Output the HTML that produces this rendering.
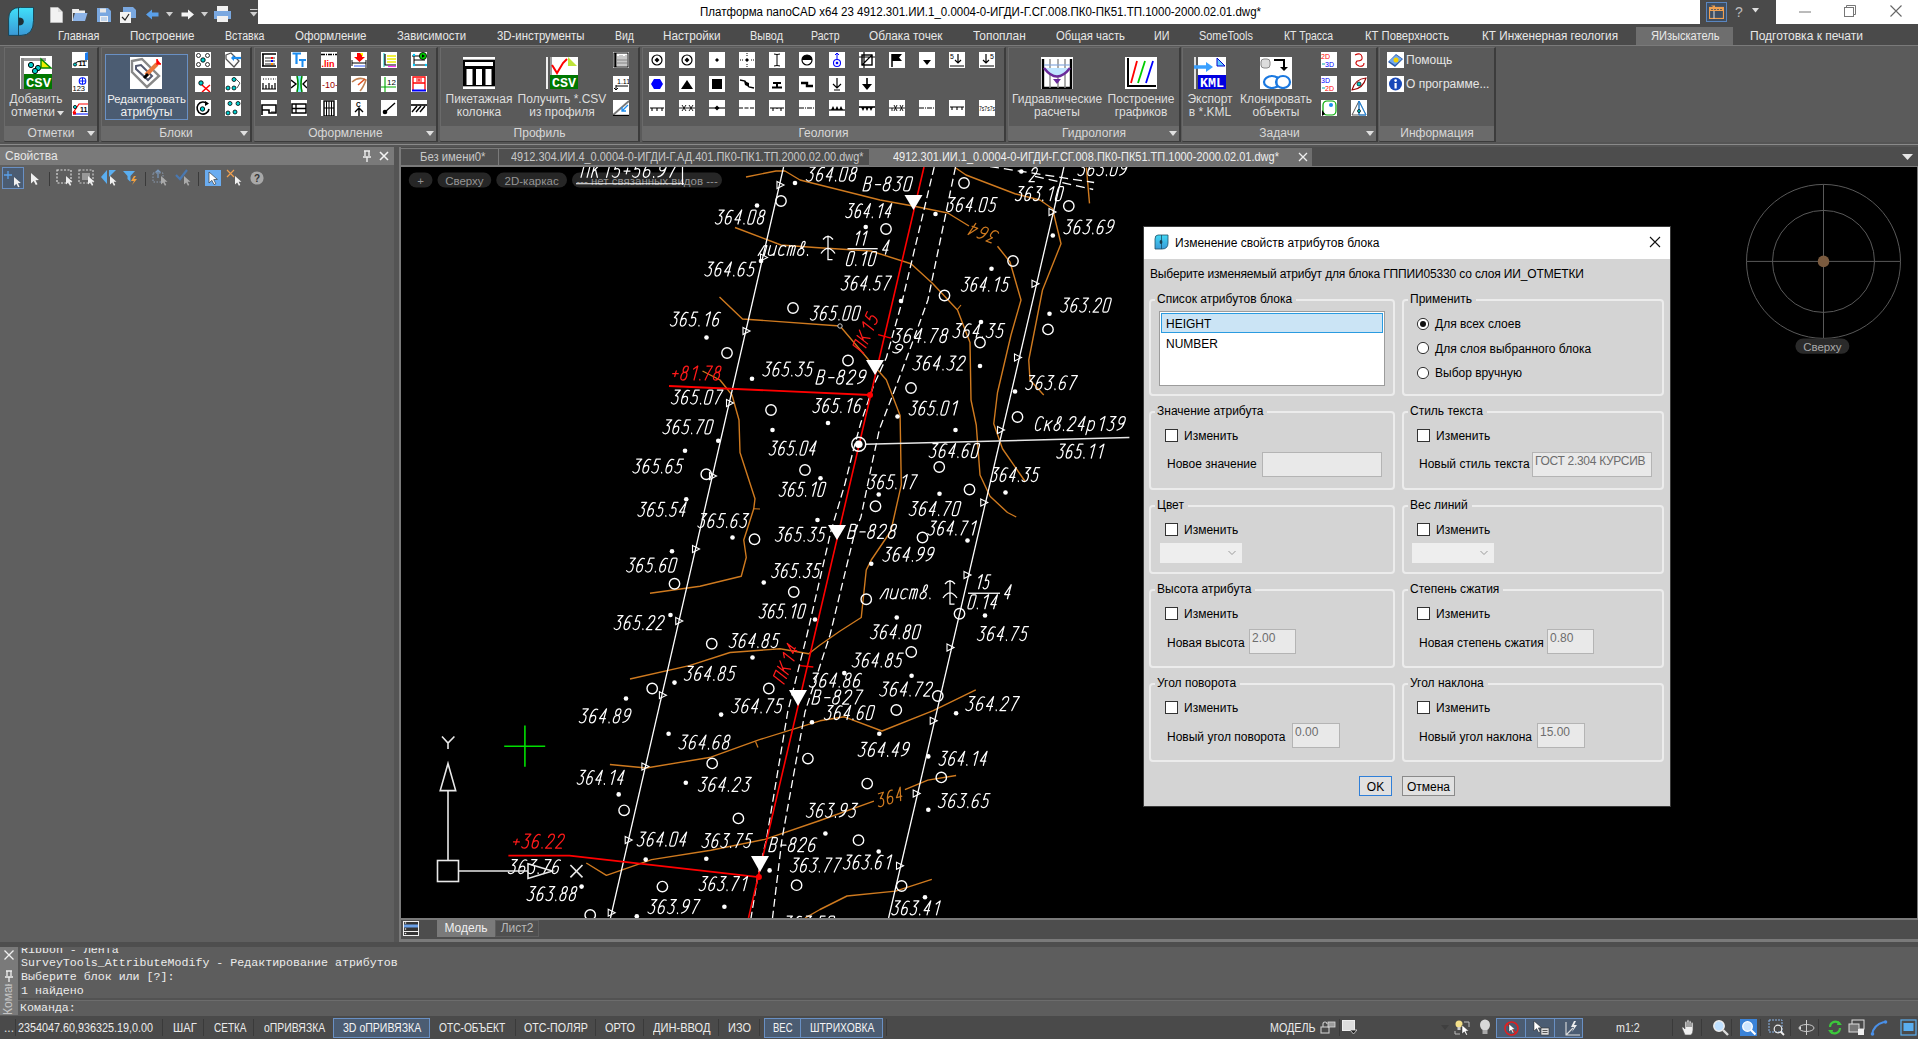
<!DOCTYPE html>
<html><head><meta charset="utf-8"><style>
html,body{margin:0;padding:0;width:1918px;height:1039px;overflow:hidden;background:#4a4a4a;font-family:"Liberation Sans", sans-serif;}
.r{position:absolute;}
.t{position:absolute;white-space:nowrap;line-height:1;}
svg{position:absolute;}
</style></head><body>
<div class="r" style="left:0px;top:0px;width:1918px;height:24px;background:#4a4a4a;"></div>
<div class="r" style="left:258px;top:0px;width:1442px;height:24px;background:#ffffff;"></div>
<div class="r" style="left:1776px;top:0px;width:142px;height:24px;background:#ffffff;"></div>
<div class="t" style="left:700px;top:5.84px;font-size:12px;color:#000000;transform:scaleX(0.9592);transform-origin:0 0;">Платформа nanoCAD x64 23 4912.301.ИИ.1_0.0004-0-ИГДИ-Г.СГ.008.ПК0-ПК51.ТП.1000-2000.02.01.dwg*</div>
<div class="r" style="left:0px;top:24px;width:1918px;height:21px;background:#4a4a4a;"></div>
<div class="r" style="left:1636px;top:27px;width:97px;height:18px;background:#6e6e6e;"></div>
<div class="t" style="left:58px;top:29.84px;font-size:12px;color:#e8e8e8;transform:scaleX(0.9086);transform-origin:0 0;">Главная</div>
<div class="t" style="left:130px;top:29.84px;font-size:12px;color:#e8e8e8;transform:scaleX(0.9653);transform-origin:0 0;">Построение</div>
<div class="t" style="left:225px;top:29.84px;font-size:12px;color:#e8e8e8;transform:scaleX(0.8856);transform-origin:0 0;">Вставка</div>
<div class="t" style="left:295px;top:29.84px;font-size:12px;color:#e8e8e8;transform:scaleX(0.9600);transform-origin:0 0;">Оформление</div>
<div class="t" style="left:396.5px;top:29.84px;font-size:12px;color:#e8e8e8;transform:scaleX(0.9475);transform-origin:0 0;">Зависимости</div>
<div class="t" style="left:497px;top:29.84px;font-size:12px;color:#e8e8e8;transform:scaleX(0.9487);transform-origin:0 0;">3D-инструменты</div>
<div class="t" style="left:615px;top:29.84px;font-size:12px;color:#e8e8e8;transform:scaleX(0.8752);transform-origin:0 0;">Вид</div>
<div class="t" style="left:663px;top:29.84px;font-size:12px;color:#e8e8e8;transform:scaleX(0.9773);transform-origin:0 0;">Настройки</div>
<div class="t" style="left:750px;top:29.84px;font-size:12px;color:#e8e8e8;transform:scaleX(0.9096);transform-origin:0 0;">Вывод</div>
<div class="t" style="left:810.5px;top:29.84px;font-size:12px;color:#e8e8e8;transform:scaleX(0.8783);transform-origin:0 0;">Растр</div>
<div class="t" style="left:869px;top:29.84px;font-size:12px;color:#e8e8e8;transform:scaleX(0.9825);transform-origin:0 0;">Облака точек</div>
<div class="t" style="left:973px;top:29.84px;font-size:12px;color:#e8e8e8;transform:scaleX(0.9946);transform-origin:0 0;">Топоплан</div>
<div class="t" style="left:1056px;top:29.84px;font-size:12px;color:#e8e8e8;transform:scaleX(0.9419);transform-origin:0 0;">Общая часть</div>
<div class="t" style="left:1154px;top:29.84px;font-size:12px;color:#e8e8e8;transform:scaleX(0.8986);transform-origin:0 0;">ИИ</div>
<div class="t" style="left:1199px;top:29.84px;font-size:12px;color:#e8e8e8;transform:scaleX(0.9097);transform-origin:0 0;">SomeTools</div>
<div class="t" style="left:1284px;top:29.84px;font-size:12px;color:#e8e8e8;transform:scaleX(0.8699);transform-origin:0 0;">КТ Трасса</div>
<div class="t" style="left:1365px;top:29.84px;font-size:12px;color:#e8e8e8;transform:scaleX(0.9391);transform-origin:0 0;">КТ Поверхность</div>
<div class="t" style="left:1482px;top:29.84px;font-size:12px;color:#e8e8e8;transform:scaleX(0.9764);transform-origin:0 0;">КТ Инженерная геология</div>
<div class="t" style="left:1650.5px;top:29.84px;font-size:12px;color:#e8e8e8;transform:scaleX(0.9228);transform-origin:0 0;">ЯИзыскатель</div>
<div class="t" style="left:1750px;top:29.84px;font-size:12px;color:#e8e8e8;transform:scaleX(1.0026);transform-origin:0 0;">Подготовка к печати</div>
<div class="r" style="left:0px;top:45px;width:1918px;height:98px;background:#5b5b5b;"></div>
<div class="r" style="left:0px;top:45px;width:1918px;height:1px;background:#7a7a7a;"></div>
<div class="r" style="left:4px;top:47px;width:95px;height:95px;background:#5a5a5a;border:1px solid #6a6a6a;border-right:2px solid #3c3c3c;border-bottom:2px solid #3c3c3c;box-sizing:border-box;"></div>
<div class="r" style="left:5px;top:126px;width:92px;height:15px;background:#6a6a6a;"></div>
<div class="t" style="left:-49.00px;width:200px;text-align:center;top:126.84px;font-size:12px;color:#d8d8d8;">Отметки</div>
<div class="r" style="left:87px;top:131px;width:0;height:0;border-left:4px solid transparent;border-right:4px solid transparent;border-top:5px solid #e0e0e0;"></div>
<div class="r" style="left:101px;top:47px;width:151px;height:95px;background:#5a5a5a;border:1px solid #6a6a6a;border-right:2px solid #3c3c3c;border-bottom:2px solid #3c3c3c;box-sizing:border-box;"></div>
<div class="r" style="left:102px;top:126px;width:148px;height:15px;background:#6a6a6a;"></div>
<div class="t" style="left:76.00px;width:200px;text-align:center;top:126.84px;font-size:12px;color:#d8d8d8;">Блоки</div>
<div class="r" style="left:240px;top:131px;width:0;height:0;border-left:4px solid transparent;border-right:4px solid transparent;border-top:5px solid #e0e0e0;"></div>
<div class="r" style="left:254px;top:47px;width:184px;height:95px;background:#5a5a5a;border:1px solid #6a6a6a;border-right:2px solid #3c3c3c;border-bottom:2px solid #3c3c3c;box-sizing:border-box;"></div>
<div class="r" style="left:255px;top:126px;width:181px;height:15px;background:#6a6a6a;"></div>
<div class="t" style="left:245.50px;width:200px;text-align:center;top:126.84px;font-size:12px;color:#d8d8d8;">Оформление</div>
<div class="r" style="left:426px;top:131px;width:0;height:0;border-left:4px solid transparent;border-right:4px solid transparent;border-top:5px solid #e0e0e0;"></div>
<div class="r" style="left:440px;top:47px;width:200px;height:95px;background:#5a5a5a;border:1px solid #6a6a6a;border-right:2px solid #3c3c3c;border-bottom:2px solid #3c3c3c;box-sizing:border-box;"></div>
<div class="r" style="left:441px;top:126px;width:197px;height:15px;background:#6a6a6a;"></div>
<div class="t" style="left:439.50px;width:200px;text-align:center;top:126.84px;font-size:12px;color:#d8d8d8;">Профиль</div>
<div class="r" style="left:642px;top:47px;width:364px;height:95px;background:#5a5a5a;border:1px solid #6a6a6a;border-right:2px solid #3c3c3c;border-bottom:2px solid #3c3c3c;box-sizing:border-box;"></div>
<div class="r" style="left:643px;top:126px;width:361px;height:15px;background:#6a6a6a;"></div>
<div class="t" style="left:723.50px;width:200px;text-align:center;top:126.84px;font-size:12px;color:#d8d8d8;">Геология</div>
<div class="r" style="left:1008px;top:47px;width:173px;height:95px;background:#5a5a5a;border:1px solid #6a6a6a;border-right:2px solid #3c3c3c;border-bottom:2px solid #3c3c3c;box-sizing:border-box;"></div>
<div class="r" style="left:1009px;top:126px;width:170px;height:15px;background:#6a6a6a;"></div>
<div class="t" style="left:994.00px;width:200px;text-align:center;top:126.84px;font-size:12px;color:#d8d8d8;">Гидрология</div>
<div class="r" style="left:1169px;top:131px;width:0;height:0;border-left:4px solid transparent;border-right:4px solid transparent;border-top:5px solid #e0e0e0;"></div>
<div class="r" style="left:1182px;top:47px;width:196px;height:95px;background:#5a5a5a;border:1px solid #6a6a6a;border-right:2px solid #3c3c3c;border-bottom:2px solid #3c3c3c;box-sizing:border-box;"></div>
<div class="r" style="left:1183px;top:126px;width:193px;height:15px;background:#6a6a6a;"></div>
<div class="t" style="left:1179.50px;width:200px;text-align:center;top:126.84px;font-size:12px;color:#d8d8d8;">Задачи</div>
<div class="r" style="left:1366px;top:131px;width:0;height:0;border-left:4px solid transparent;border-right:4px solid transparent;border-top:5px solid #e0e0e0;"></div>
<div class="r" style="left:1379px;top:47px;width:117px;height:95px;background:#5a5a5a;border:1px solid #6a6a6a;border-right:2px solid #3c3c3c;border-bottom:2px solid #3c3c3c;box-sizing:border-box;"></div>
<div class="r" style="left:1380px;top:126px;width:114px;height:15px;background:#6a6a6a;"></div>
<div class="t" style="left:1337.00px;width:200px;text-align:center;top:126.84px;font-size:12px;color:#d8d8d8;">Информация</div>
<svg style="left:8px;top:7px" width="26" height="29" viewBox="0 0 26 29"><defs><linearGradient id="lgA" x1="0" y1="0" x2="0" y2="1"><stop offset="0" stop-color="#40e0fa"/><stop offset="1" stop-color="#3a98d6"/></linearGradient></defs><path d="M0.6 12 Q0.6 0.4 12.5 0.4 H25.5 V13.5 Q25.5 28.4 13 28.4 H0.6Z" fill="url(#lgA)" stroke="#123f50" stroke-width="0.9"/><path d="M10.5 0.5 V28.5" stroke="#123f50" stroke-width="0.9"/><path d="M10.5 10.5 Q15.8 10.5 15.8 14.5 Q15.8 18.5 10.5 18.5Z" fill="#1e2e36"/></svg>
<svg style="left:50px;top:7px" width="13" height="16" viewBox="0 0 13 16"><path d="M0.5 0.5 H8 L12.5 5 V15.5 H0.5Z" fill="#f2f2f2" stroke="#ccc" stroke-width="0.6"/><path d="M8 0.5 V5 H12.5" fill="#ddd"/></svg>
<svg style="left:72px;top:8px" width="16" height="14" viewBox="0 0 16 14"><path d="M0.5 1 H7 V2.5 H13 V5 H0.5Z" fill="#eee"/><path d="M0.5 13 L3 5 H15.5 L13 13Z" fill="#8db4e8"/><path d="M0.5 1 V13" stroke="#ddd"/></svg>
<svg style="left:97px;top:8px" width="14" height="14" viewBox="0 0 14 14"><path d="M0 0 H11 L14 3 V14 H0Z" fill="#7aa8e0"/><rect x="3" y="0.5" width="6" height="4" fill="#e8e8e8"/><rect x="3" y="8" width="8" height="6" fill="#f2f2f2"/><path d="M4 10 H10 M4 12 H10" stroke="#7aa8e0" stroke-width="0.8"/></svg>
<svg style="left:120px;top:7px" width="16" height="16" viewBox="0 0 16 16"><path d="M3 0 H13 L16 3 V11 H3Z" fill="#7aa8e0"/><rect x="0" y="5" width="11" height="11" fill="#f2f2f2"/><path d="M2 10 L5 13 L9 7" fill="none" stroke="#222" stroke-width="1.2"/></svg>
<svg style="left:146px;top:9px" width="13" height="11" viewBox="0 0 13 11"><path d="M0 5.5 L6 0.5 V3.5 H12.5 V7.5 H6 V10.5Z" fill="#5aa0ea"/></svg>
<svg style="left:166px;top:12px" width="8" height="5" viewBox="0 0 8 5"><path d="M0 0 H7 L3.5 4.5Z" fill="#cfcfcf"/></svg>
<svg style="left:181px;top:9px" width="13" height="11" viewBox="0 0 13 11"><path d="M13 5.5 L7 0.5 V3.5 H0.5 V7.5 H7 V10.5Z" fill="#f4f4f4"/></svg>
<svg style="left:201px;top:12px" width="8" height="5" viewBox="0 0 8 5"><path d="M0 0 H7 L3.5 4.5Z" fill="#cfcfcf"/></svg>
<svg style="left:214px;top:6px" width="17" height="16" viewBox="0 0 17 16"><rect x="3" y="0" width="11" height="5" fill="#f0f0f0"/><rect x="0" y="5" width="17" height="8" fill="#7aa8e0"/><rect x="3" y="10" width="11" height="6" fill="#f0f0f0"/></svg>
<svg style="left:250px;top:9px" width="8" height="9" viewBox="0 0 8 9"><path d="M0 0.5 H7.5" stroke="#cfcfcf" stroke-width="1"/><path d="M0 3 H7.5 L3.75 7.5Z" fill="#cfcfcf"/></svg>
<div class="r" style="left:1706px;top:2px;width:21px;height:20px;background:#3f4f63;border:1px solid #5a86c0;box-sizing:border-box;"></div>
<svg style="left:1709px;top:5px" width="15" height="14" viewBox="0 0 15 14"><rect x="0.5" y="2.5" width="14" height="11" fill="none" stroke="#f0a050" stroke-width="1.2"/><rect x="1" y="3" width="13" height="3" fill="#f0a050"/><path d="M2 0.5 H6 V3" fill="#f0a050"/><path d="M5 6 V13.5" stroke="#e0e0e0" stroke-width="1"/><path d="M2 4.5 H13" stroke="#3f4f63" stroke-width="0.8" stroke-dasharray="2,1"/></svg>
<div class="t" style="left:1731.00px;width:16px;text-align:center;top:5.15px;font-size:14px;color:#bdbdbd;">?</div>
<svg style="left:1752px;top:8px" width="7" height="5" viewBox="0 0 7 5"><path d="M0 0 H7 L3.5 4.5Z" fill="#e0e0e0"/></svg>
<svg style="left:1799px;top:11px" width="12" height="2" viewBox="0 0 12 2"><path d="M0 1 H12" stroke="#777" stroke-width="1"/></svg>
<svg style="left:1844px;top:5px" width="12" height="12" viewBox="0 0 12 12"><path d="M2.5 2.5 V0.5 H11.5 V9.5 H9.5" fill="none" stroke="#777"/><rect x="0.5" y="2.5" width="9" height="9" fill="none" stroke="#777"/></svg>
<svg style="left:1890px;top:5px" width="12" height="12" viewBox="0 0 12 12"><path d="M0.5 0.5 L11.5 11.5 M11.5 0.5 L0.5 11.5" stroke="#666" stroke-width="1.1"/></svg>
<svg style="left:20px;top:56px" width="32" height="33" viewBox="0 0 32 33"><rect x="0" y="0" width="32" height="33" fill="#fff"/><rect x="1" y="2" width="3" height="31" fill="#888"/><rect x="4" y="2" width="22" height="3" fill="#999"/><g fill="#0cc" stroke="#000" stroke-width="1"><circle cx="11" cy="9" r="2.6"/><circle cx="18" cy="12" r="2.6"/><circle cx="15" cy="15" r="2.6"/></g><path d="M21 3 L31 12 H21Z" fill="#ee0" stroke="#080" stroke-width="1.4"/><rect x="4" y="18" width="28" height="15" fill="#007700"/><text x="6" y="31" font-family="Liberation Mono" font-weight="bold" font-size="13" fill="#fff" textLength="25" lengthAdjust="spacingAndGlyphs">CSV</text></svg>
<svg style="left:72px;top:52px" width="16" height="16" viewBox="0 0 16 16"><rect x="0" y="0" width="16" height="16" fill="#fff"/><path d="M2 13 Q4 9 9 9 H15" fill="none" stroke="#000" stroke-width="1"/><circle cx="3" cy="12.5" r="1.6" fill="#0cc" stroke="#000" stroke-width="0.8"/><text x="6.5" y="14" font-size="7" font-family="Liberation Sans" font-weight="bold" fill="#000">11</text><path d="M13 1 L16 0 V8 H13Z" fill="#1a7cf0"/></svg>
<svg style="left:72px;top:76px" width="16" height="16" viewBox="0 0 16 16"><rect x="0" y="0" width="16" height="16" fill="#fff"/><text x="0.5" y="15" font-size="7.5" font-family="Liberation Sans" fill="#000">123</text><circle cx="10.5" cy="5" r="3.3" fill="none" stroke="#0018ff" stroke-width="1.1"/><path d="M10.5 1.7 V8.3 M7.2 5 H13.8" stroke="#0018ff" stroke-width="1"/></svg>
<svg style="left:72px;top:100px" width="16" height="16" viewBox="0 0 16 16"><rect x="0" y="0" width="16" height="16" fill="#fff"/><path d="M1 13 L7 4 H16" fill="none" stroke="#f00" stroke-width="1.2"/><path d="M1 14 H16" stroke="#2030ff" stroke-width="1.2"/><rect x="1" y="11.5" width="3" height="3" fill="#f00"/><circle cx="3" cy="7" r="1.6" fill="#0cc" stroke="#000" stroke-width="0.8"/><text x="8" y="12" font-size="7" font-family="Liberation Sans" font-weight="bold" fill="#000">11</text></svg>
<div class="t" style="left:-4.00px;width:80px;text-align:center;top:93.34px;font-size:12px;color:#dedede;">Добавить</div>
<div class="t" style="left:-7.00px;width:80px;text-align:center;top:105.84px;font-size:12px;color:#dedede;">отметки</div>
<svg style="left:57px;top:111px" width="7" height="5" viewBox="0 0 7 5"><path d="M0 0 H7 L3.5 4.5Z" fill="#e0e0e0"/></svg>
<div class="r" style="left:105px;top:54px;width:83px;height:66px;background:#4b5c72;border:1px solid #6990c4;box-sizing:border-box;"></div>
<svg style="left:130px;top:57px" width="32" height="32" viewBox="0 0 32 32"><rect width="32" height="32" fill="#fff"/><path d="M2 4 L12 2 L29 19 L17 30 L2 15Z" fill="none" stroke="#888" stroke-width="2.4"/><path d="M6 9 L11 8 L22 19 L18 23 L6 12Z" fill="none" stroke="#555a70" stroke-width="2"/><path d="M16 18 L27 7" stroke="#e8783c" stroke-width="4"/><path d="M14 21 L18 17" stroke="#000" stroke-width="3"/><path d="M27 2 V7 H31" fill="#f00" stroke="#f00" stroke-width="1.5"/></svg>
<div class="t" style="left:101.50px;width:90px;text-align:center;top:93.85px;font-size:11.4px;color:#f0f0f0;">Редактировать</div>
<div class="t" style="left:101.50px;width:90px;text-align:center;top:105.84px;font-size:12px;color:#f0f0f0;">атрибуты</div>
<svg style="left:195px;top:52px" width="16" height="16" viewBox="0 0 16 16"><rect x="0" y="0" width="16" height="16" fill="#fff"/><g fill="none" stroke="#000" stroke-width="0.8"><circle cx="3.5" cy="3.5" r="2"/><circle cx="12.5" cy="3.5" r="2"/><circle cx="3.5" cy="12.5" r="2"/><circle cx="12.5" cy="12.5" r="2"/></g><circle cx="8" cy="8" r="2.2" fill="#0cc" stroke="#000" stroke-width="0.9"/></svg>
<svg style="left:195px;top:76px" width="16" height="16" viewBox="0 0 16 16"><rect x="0" y="0" width="16" height="16" fill="#fff"/><circle cx="6" cy="7" r="2.2" fill="#0cc" stroke="#000" stroke-width="0.9"/><path d="M7 9 L15 16 M15 9 L7 16" stroke="#f00" stroke-width="1.5"/></svg>
<svg style="left:195px;top:100px" width="16" height="16" viewBox="0 0 16 16"><rect x="0" y="0" width="16" height="16" fill="#fff"/><path d="M12.5 4 A6 6 0 1 0 14 9" fill="none" stroke="#000" stroke-width="1.6"/><path d="M10 1 L14 3.5 L10 6Z" fill="#000"/><circle cx="7.5" cy="9" r="2.2" fill="#0cc" stroke="#000" stroke-width="0.9"/></svg>
<svg style="left:225px;top:52px" width="16" height="16" viewBox="0 0 16 16"><rect x="0" y="0" width="16" height="16" fill="#fff"/><path d="M1 3 L6 1 L14 9 L9 15 L1 7Z" fill="#fff" stroke="#555" stroke-width="1.3"/><path d="M7 6 H16" stroke="#1a8cf0" stroke-width="2.2"/><path d="M6 6 L9 3 V9Z" fill="#1a8cf0"/></svg>
<svg style="left:225px;top:76px" width="16" height="16" viewBox="0 0 16 16"><rect x="0" y="0" width="16" height="16" fill="#fff"/><g fill="#0cc" stroke="#000" stroke-width="0.8"><circle cx="9" cy="3.5" r="2"/><circle cx="3" cy="12" r="2"/><circle cx="9" cy="12" r="2"/></g><path d="M11 3 L15 7 L12 12" fill="none" stroke="#555" stroke-width="1"/></svg>
<svg style="left:225px;top:100px" width="16" height="16" viewBox="0 0 16 16"><rect x="0" y="0" width="16" height="16" fill="#fff"/><g fill="#0cc" stroke="#000" stroke-width="0.8"><circle cx="5" cy="3.5" r="2"/><circle cx="13" cy="3.5" r="2"/><circle cx="3" cy="13" r="2"/><circle cx="10" cy="12" r="2"/></g></svg>
<svg style="left:261px;top:52px" width="16" height="16" viewBox="0 0 16 16"><rect x="0" y="0" width="16" height="16" fill="#fff"/><path d="M1 2 H15 M1 14 H15 M2 2 V14" stroke="#000" stroke-width="1.6"/><path d="M4 6 H14 M4 9 H14 M4 12 H14" stroke="#777" stroke-width="1.3"/><rect x="10" y="5" width="2" height="2" fill="#f00"/><rect x="10" y="8" width="2" height="2" fill="#00f"/><rect x="10" y="11" width="2" height="2" fill="#f80"/></svg>
<svg style="left:291px;top:52px" width="16" height="16" viewBox="0 0 16 16"><rect x="0" y="0" width="16" height="16" fill="#fff"/><path d="M1.5 1.5 H10 M5.5 1.5 V12" stroke="#1a8cf0" stroke-width="2.2"/><path d="M8 8 H15 M11.5 8 V15" stroke="#1a8cf0" stroke-width="2"/></svg>
<svg style="left:321px;top:52px" width="16" height="16" viewBox="0 0 16 16"><rect x="0" y="0" width="16" height="16" fill="#fff"/><path d="M0 2.5 H16" stroke="#000" stroke-width="1.4" stroke-dasharray="4,1,1,1"/><text x="0.5" y="14.5" font-size="9" font-weight="bold" font-family="Liberation Sans" fill="#f00">.lin</text></svg>
<svg style="left:351px;top:52px" width="16" height="16" viewBox="0 0 16 16"><rect x="0" y="0" width="16" height="16" fill="#fff"/><path d="M6 1 H11 V5 H14 L8.5 10 L3 5 H6Z" fill="#f00"/><path d="M9 1 H12 V5" fill="#ff0"/><path d="M1 8 V14 M15 8 V16 M1 11 H15" stroke="#000" stroke-width="1"/><path d="M3 14 H14" stroke="#2f5cff" stroke-width="1"/></svg>
<svg style="left:381px;top:52px" width="16" height="16" viewBox="0 0 16 16"><rect x="0" y="0" width="16" height="16" fill="#fff"/><path d="M3 1 V15" stroke="#0cc" stroke-width="1"/><path d="M4 2 V13 H15" fill="none" stroke="#000" stroke-width="1.2"/><path d="M6 4 H15 M6 7 H15 M6 10 H15" stroke="#ee0" stroke-width="1.6"/><path d="M7 14.5 H15" stroke="#f3f" stroke-width="1.2"/></svg>
<svg style="left:411px;top:52px" width="16" height="16" viewBox="0 0 16 16"><rect x="0" y="0" width="16" height="16" fill="#fff"/><path d="M1 4 H14 M3 8 H14 M3 13 H15 M3 4 V13" stroke="#000" stroke-width="1"/><circle cx="12" cy="4" r="3.6" fill="#0c0" stroke="#000" stroke-width="0.8"/><path d="M11 2.2 L14 4 L11 5.8Z" fill="#000"/><g fill="#0cf"><circle cx="3" cy="3" r="1.2"/><circle cx="3" cy="13" r="1.2"/><circle cx="15" cy="13" r="1.2"/></g></svg>
<svg style="left:261px;top:76px" width="16" height="16" viewBox="0 0 16 16"><rect x="0" y="0" width="16" height="16" fill="#fff"/><path d="M1 13 H15 M2 13 V7 M5 13 V9 M8 13 V7 M11 13 V9 M14 13 V7" stroke="#000" stroke-width="1.2"/><path d="M2 3 H15" stroke="#000" stroke-width="1" stroke-dasharray="1,1.5"/></svg>
<svg style="left:291px;top:76px" width="16" height="16" viewBox="0 0 16 16"><rect x="0" y="0" width="16" height="16" fill="#fff"/><path d="M6 0 Q8 8 6 16 H11 Q9 8 11 0Z" fill="#7ef"/><path d="M6 0 Q8 8 6 16 M11 0 Q9 8 11 16" fill="none" stroke="#080" stroke-width="1.6"/><path d="M0 4 L5 8 L0 12 M16 4 L12 8 L16 12" fill="none" stroke="#000" stroke-width="1.4"/></svg>
<svg style="left:321px;top:76px" width="16" height="16" viewBox="0 0 16 16"><rect x="0" y="0" width="16" height="16" fill="#fff"/><text x="1" y="12" font-size="9" font-family="Liberation Sans" fill="#900">-10-</text></svg>
<svg style="left:351px;top:76px" width="16" height="16" viewBox="0 0 16 16"><rect x="0" y="0" width="16" height="16" fill="#fff"/><path d="M1 6 Q8 0 15 4 Q12 12 9 15" fill="none" stroke="#c08050" stroke-width="1.6"/><path d="M7 9 L14 3" stroke="#e05020" stroke-width="1.6"/></svg>
<svg style="left:381px;top:76px" width="16" height="16" viewBox="0 0 16 16"><rect x="0" y="0" width="16" height="16" fill="#fff"/><path d="M4 1 V16 M0 11 H15" stroke="#0a0" stroke-width="1.1"/><text x="6" y="9" font-size="8" font-family="Liberation Sans" fill="#000">12</text></svg>
<svg style="left:411px;top:76px" width="16" height="16" viewBox="0 0 16 16"><rect x="0" y="0" width="16" height="16" fill="#fff"/><path d="M2 15 V1 H14 V15 M2 7 H14" fill="none" stroke="#f00" stroke-width="1.3"/><path d="M5 3 H11 M5 5 H11 M8 3 V5" stroke="#f00" stroke-width="1"/><path d="M1 14.5 H15" stroke="#00f" stroke-width="2"/></svg>
<svg style="left:261px;top:100px" width="16" height="16" viewBox="0 0 16 16"><rect x="0" y="0" width="16" height="16" fill="#fff"/><path d="M1 5 H15 V13 H8 V10 H1Z M1 5 V15" fill="none" stroke="#000" stroke-width="1.6"/><path d="M10 12 H14" stroke="#000" stroke-width="0.8"/></svg>
<svg style="left:291px;top:100px" width="16" height="16" viewBox="0 0 16 16"><rect x="0" y="0" width="16" height="16" fill="#fff"/><rect x="1" y="4" width="14" height="9" fill="none" stroke="#000" stroke-width="1.5"/><path d="M1 8.5 H15 M5 4 V13" stroke="#000" stroke-width="1.3"/></svg>
<svg style="left:321px;top:100px" width="16" height="16" viewBox="0 0 16 16"><rect x="0" y="0" width="16" height="16" fill="#fff"/><rect x="3" y="1" width="10" height="15" fill="none" stroke="#000" stroke-width="1.4"/><path d="M5.5 1 V16 M8 1 V16 M10.5 1 V16 M3 8 H13" stroke="#000" stroke-width="1"/></svg>
<svg style="left:351px;top:100px" width="16" height="16" viewBox="0 0 16 16"><rect x="0" y="0" width="16" height="16" fill="#fff"/><text x="5" y="6.5" font-size="6.5" font-family="Liberation Sans" font-weight="bold" fill="#000">C</text><path d="M8 16 V8 M4 12 L8 8 L12 12" fill="none" stroke="#000" stroke-width="1.4"/></svg>
<svg style="left:381px;top:100px" width="16" height="16" viewBox="0 0 16 16"><rect x="0" y="0" width="16" height="16" fill="#fff"/><path d="M4 12 L14 3" stroke="#000" stroke-width="1.3"/><circle cx="4" cy="12" r="2.3" fill="#000"/></svg>
<svg style="left:411px;top:100px" width="16" height="16" viewBox="0 0 16 16"><rect x="0" y="0" width="16" height="16" fill="#fff"/><path d="M0 5 H16" stroke="#000" stroke-width="1.6"/><path d="M1 12 L6 6 M5 12 L10 6 M9 12 L14 6" stroke="#000" stroke-width="1.4"/></svg>
<svg style="left:463px;top:57px" width="32" height="32" viewBox="0 0 32 32"><rect x="0" y="0" width="32" height="2.5" fill="#fff"/><rect x="0" y="29.5" width="32" height="2.5" fill="#fff"/><rect x="0" y="3" width="32" height="26" fill="#000"/><rect x="2" y="5" width="28" height="4" fill="#fff"/><rect x="3.5" y="12" width="6" height="16" fill="#fff"/><rect x="13" y="12" width="6" height="16" fill="#fff"/><rect x="22.5" y="12" width="6" height="16" fill="#fff"/></svg>
<div class="t" style="left:434.00px;width:90px;text-align:center;top:93.34px;font-size:12px;color:#dedede;">Пикетажная</div>
<div class="t" style="left:434.00px;width:90px;text-align:center;top:105.84px;font-size:12px;color:#dedede;">колонка</div>
<svg style="left:546px;top:57px" width="32" height="32" viewBox="0 0 32 32"><rect x="0" y="0" width="2" height="32" fill="#eee"/><rect x="4" y="0" width="28" height="18" fill="#fff"/><rect x="4" y="0" width="2" height="18" fill="#999"/><path d="M6 8 L11 16 L17 6 L21 2" fill="none" stroke="#f00" stroke-width="2"/><path d="M22 0 L31 9 H22Z" fill="#bee33a"/><rect x="4" y="18" width="28" height="14" fill="#007700"/><text x="6" y="30" font-family="Liberation Mono" font-weight="bold" font-size="12" fill="#fff" textLength="24" lengthAdjust="spacingAndGlyphs">CSV</text></svg>
<div class="t" style="left:512.00px;width:100px;text-align:center;top:93.34px;font-size:12px;color:#dedede;">Получить *.CSV</div>
<div class="t" style="left:512.00px;width:100px;text-align:center;top:105.84px;font-size:12px;color:#dedede;">из профиля</div>
<svg style="left:613px;top:52px" width="16" height="16" viewBox="0 0 16 16"><rect x="0" y="0" width="16" height="16" fill="#fff"/><rect x="1" y="1" width="14" height="14" fill="#fff" stroke="#000" stroke-width="1"/><path d="M2.5 1 V15" stroke="#000" stroke-width="2"/><path d="M5 4 V14 M7 3 V14 M9 3 V14 M11 4 V14 M13 3 V14 M4 8 H15 M4 11 H15" stroke="#777" stroke-width="0.8"/></svg>
<svg style="left:613px;top:76px" width="16" height="16" viewBox="0 0 16 16"><rect x="0" y="0" width="16" height="16" fill="#fff"/><text x="4" y="8" font-size="7" font-family="Liberation Sans" fill="#000">1.11</text><path d="M3 10 H15 M3 9 V14 M1 12 L3 14 L5 12" fill="none" stroke="#000" stroke-width="1"/></svg>
<svg style="left:613px;top:100px" width="16" height="16" viewBox="0 0 16 16"><rect x="0" y="0" width="16" height="16" fill="#fff"/><path d="M0 15 L16 1" stroke="#777" stroke-width="1.8"/><path d="M15 5 L9 11 M9 7 V11 H13" fill="none" stroke="#1a8cf0" stroke-width="1.3"/><path d="M0 15.5 H16" stroke="#000" stroke-width="1.4"/></svg>
<svg style="left:649px;top:52px" width="16" height="16" viewBox="0 0 16 16"><rect x="0" y="0" width="16" height="16" fill="#fff"/><circle cx="8" cy="8" r="5" fill="none" stroke="#000" stroke-width="1.2"/><path d="M8 5.5 L10.5 8 L8 10.5 L5.5 8Z" fill="#000"/></svg>
<svg style="left:679px;top:52px" width="16" height="16" viewBox="0 0 16 16"><rect x="0" y="0" width="16" height="16" fill="#fff"/><circle cx="8" cy="8" r="5" fill="none" stroke="#000" stroke-width="1.2"/><path d="M8 5.5 L10.5 8 L8 10.5 L5.5 8Z" fill="#000"/></svg>
<svg style="left:709px;top:52px" width="16" height="16" viewBox="0 0 16 16"><rect x="0" y="0" width="16" height="16" fill="#fff"/><path d="M8 6 L10 8 L8 10 L6 8Z" fill="#000"/></svg>
<svg style="left:739px;top:52px" width="16" height="16" viewBox="0 0 16 16"><rect x="0" y="0" width="16" height="16" fill="#fff"/><path d="M8 6 L10 8 L8 10 L6 8Z" fill="#000"/><path d="M8 1 V4 M8 12 V15 M1 8 H4 M12 8 H15" stroke="#000" stroke-width="1" stroke-dasharray="1,1"/></svg>
<svg style="left:769px;top:52px" width="16" height="16" viewBox="0 0 16 16"><rect x="0" y="0" width="16" height="16" fill="#fff"/><path d="M5 2 Q8 3 11 2 M8 3 V13 M5 14 Q8 13 11 14" fill="none" stroke="#000" stroke-width="1"/></svg>
<svg style="left:799px;top:52px" width="16" height="16" viewBox="0 0 16 16"><rect x="0" y="0" width="16" height="16" fill="#fff"/><circle cx="8" cy="8" r="5" fill="none" stroke="#000" stroke-width="1.2"/><path d="M3 8 A5 5 0 0 1 13 8Z" fill="#000"/></svg>
<svg style="left:829px;top:52px" width="16" height="16" viewBox="0 0 16 16"><rect x="0" y="0" width="16" height="16" fill="#fff"/><circle cx="8" cy="11" r="3.5" fill="none" stroke="#00f" stroke-width="1.1"/><rect x="6.8" y="9.8" width="2.4" height="2.4" fill="#00f"/><path d="M8 7.5 V1 M6 3 L8 1 L10 3" fill="none" stroke="#00f" stroke-width="1"/></svg>
<svg style="left:859px;top:52px" width="16" height="16" viewBox="0 0 16 16"><rect x="0" y="0" width="16" height="16" fill="#fff"/><rect x="3" y="3" width="10" height="10" fill="none" stroke="#000" stroke-width="1.4"/><path d="M3 13 L13 3 M0 5 H16 M5 0 V16" stroke="#000" stroke-width="1.2"/></svg>
<svg style="left:889px;top:52px" width="16" height="16" viewBox="0 0 16 16"><rect x="0" y="0" width="16" height="16" fill="#fff"/><path d="M3 15 V2" stroke="#000" stroke-width="1.5"/><path d="M3 2 H13 L10 5.5 L13 9 H3Z" fill="#000"/></svg>
<svg style="left:919px;top:52px" width="16" height="16" viewBox="0 0 16 16"><rect x="0" y="0" width="16" height="16" fill="#fff"/><path d="M4 8 H12 L8 13Z" fill="#000"/></svg>
<svg style="left:949px;top:52px" width="16" height="16" viewBox="0 0 16 16"><rect x="0" y="0" width="16" height="16" fill="#fff"/><text x="1" y="7" font-size="7" font-family="Liberation Sans" fill="#000">5</text><path d="M9 2 V11 M6 8 L9 11 L12 8 M1 14 H15" fill="none" stroke="#000" stroke-width="1.2"/></svg>
<svg style="left:979px;top:52px" width="16" height="16" viewBox="0 0 16 16"><rect x="0" y="0" width="16" height="16" fill="#fff"/><text x="11" y="7" font-size="7" font-family="Liberation Sans" fill="#000">5</text><path d="M7 2 V11 M4 8 L7 11 L10 8 M1 14 H15" fill="none" stroke="#000" stroke-width="1.2"/></svg>
<svg style="left:649px;top:76px" width="16" height="16" viewBox="0 0 16 16"><rect x="0" y="0" width="16" height="16" fill="#fff"/><path d="M5 3 H11 L14 8 L11 13 H5 L2 8Z" fill="#00f"/></svg>
<svg style="left:679px;top:76px" width="16" height="16" viewBox="0 0 16 16"><rect x="0" y="0" width="16" height="16" fill="#fff"/><path d="M2 13 L8 4 L14 13Z" fill="#000"/></svg>
<svg style="left:709px;top:76px" width="16" height="16" viewBox="0 0 16 16"><rect x="0" y="0" width="16" height="16" fill="#fff"/><rect x="3" y="3" width="10" height="10" fill="#000"/></svg>
<svg style="left:739px;top:76px" width="16" height="16" viewBox="0 0 16 16"><rect x="0" y="0" width="16" height="16" fill="#fff"/><path d="M1 4 L6 5 L10 11 L15 12" fill="none" stroke="#000" stroke-width="1.3"/><path d="M5 5 L10 7 L10 11 L6 9Z" fill="#000"/></svg>
<svg style="left:769px;top:76px" width="16" height="16" viewBox="0 0 16 16"><rect x="0" y="0" width="16" height="16" fill="#fff"/><path d="M4 7 H12 M8 7 V11 M3 11.5 H13" stroke="#000" stroke-width="2"/></svg>
<svg style="left:799px;top:76px" width="16" height="16" viewBox="0 0 16 16"><rect x="0" y="0" width="16" height="16" fill="#fff"/><path d="M2 7 H8 V10 H14" fill="none" stroke="#000" stroke-width="2.4"/></svg>
<svg style="left:829px;top:76px" width="16" height="16" viewBox="0 0 16 16"><rect x="0" y="0" width="16" height="16" fill="#fff"/><path d="M8 2 V12 M4 8 L8 12 L12 8 M5 14 H11" fill="none" stroke="#000" stroke-width="1.2"/></svg>
<svg style="left:859px;top:76px" width="16" height="16" viewBox="0 0 16 16"><rect x="0" y="0" width="16" height="16" fill="#fff"/><path d="M8 2 V10" stroke="#000" stroke-width="1.6"/><path d="M3 8 H13 L8 14Z" fill="#000"/></svg>
<svg style="left:649px;top:100px" width="16" height="16" viewBox="0 0 16 16"><rect x="0" y="0" width="16" height="16" fill="#fff"/><path d="M1 8 H15 M3 8 V11 M8 8 V11 M13 8 V11" stroke="#000" stroke-width="1.1"/></svg>
<svg style="left:679px;top:100px" width="16" height="16" viewBox="0 0 16 16"><rect x="0" y="0" width="16" height="16" fill="#fff"/><path d="M0 8 H16" stroke="#000" stroke-width="0.9"/><path d="M3 5 L7 11 M7 5 L3 11 M10 5 L14 11 M14 5 L10 11" stroke="#000" stroke-width="0.9"/></svg>
<svg style="left:709px;top:100px" width="16" height="16" viewBox="0 0 16 16"><rect x="0" y="0" width="16" height="16" fill="#fff"/><path d="M0 8 H16" stroke="#000" stroke-width="1.1"/><path d="M8 5.5 L10.5 8 L8 10.5 L5.5 8Z" fill="#000"/></svg>
<svg style="left:739px;top:100px" width="16" height="16" viewBox="0 0 16 16"><rect x="0" y="0" width="16" height="16" fill="#fff"/><path d="M0 8 H16" stroke="#000" stroke-width="1.2" stroke-dasharray="4,1.5"/></svg>
<svg style="left:769px;top:100px" width="16" height="16" viewBox="0 0 16 16"><rect x="0" y="0" width="16" height="16" fill="#fff"/><path d="M1 8 H15 M4 8 V11 M12 8 V11" stroke="#000" stroke-width="1.1"/><path d="M8 8 V9" stroke="#000"/></svg>
<svg style="left:799px;top:100px" width="16" height="16" viewBox="0 0 16 16"><rect x="0" y="0" width="16" height="16" fill="#fff"/><path d="M0 8 H16" stroke="#000" stroke-width="1.1" stroke-dasharray="5,1,1,1"/></svg>
<svg style="left:829px;top:100px" width="16" height="16" viewBox="0 0 16 16"><rect x="0" y="0" width="16" height="16" fill="#fff"/><path d="M0 10 H16" stroke="#000" stroke-width="1.2"/><path d="M2 10 L4 6 L6 10 M6 10 L8 6 L10 10 M10 10 L12 6 L14 10" fill="#000"/></svg>
<svg style="left:859px;top:100px" width="16" height="16" viewBox="0 0 16 16"><rect x="0" y="0" width="16" height="16" fill="#fff"/><path d="M0 7 H16" stroke="#000" stroke-width="1.6"/><path d="M2 7 L4 11 L6 7 M6 7 L8 11 L10 7 M10 7 L12 11 L14 7" fill="#000"/></svg>
<svg style="left:889px;top:100px" width="16" height="16" viewBox="0 0 16 16"><rect x="0" y="0" width="16" height="16" fill="#fff"/><path d="M0 8 H16" stroke="#000" stroke-width="0.9"/><path d="M5 5 L8 11 M8 5 L5 11 M11 5 L14 11 M14 5 L11 11 M3 8 V11" stroke="#000" stroke-width="0.9"/></svg>
<svg style="left:919px;top:100px" width="16" height="16" viewBox="0 0 16 16"><rect x="0" y="0" width="16" height="16" fill="#fff"/><path d="M0 8 H16" stroke="#000" stroke-width="1.1" stroke-dasharray="5,1,1,1"/></svg>
<svg style="left:949px;top:100px" width="16" height="16" viewBox="0 0 16 16"><rect x="0" y="0" width="16" height="16" fill="#fff"/><path d="M1 7 H15 M3 7 V10 M8 7 V10 M13 7 V10" stroke="#000" stroke-width="1.1"/></svg>
<svg style="left:979px;top:100px" width="16" height="16" viewBox="0 0 16 16"><rect x="0" y="0" width="16" height="16" fill="#fff"/><text x="0" y="11" font-size="6.5" font-family="Liberation Sans" fill="#000" textLength="16" lengthAdjust="spacingAndGlyphs">7s7s7s</text></svg>
<svg style="left:1041px;top:57px" width="32" height="32" viewBox="0 0 32 32"><rect width="32" height="32" fill="#fff"/><path d="M2 2 V31 H30 V2" fill="none" stroke="#000" stroke-width="2.4"/><path d="M9 2 V31 M17 2 V31 M24 2 V31" stroke="#888" stroke-width="1.4"/><path d="M3 8 H29" stroke="#8ad" stroke-width="1.2"/><path d="M3 11 Q16 28 29 11" fill="#bfe4ff" stroke="#6a2a9a" stroke-width="2.5"/><path d="M12 22 L16 27 L20 22Z" fill="#6a2a9a"/></svg>
<div class="t" style="left:1007.00px;width:100px;text-align:center;top:93.34px;font-size:12px;color:#dedede;">Гидравлические</div>
<div class="t" style="left:1007.00px;width:100px;text-align:center;top:105.84px;font-size:12px;color:#dedede;">расчеты</div>
<svg style="left:1125px;top:57px" width="32" height="32" viewBox="0 0 32 32"><rect width="32" height="32" fill="#fff"/><path d="M3 1 V29 H31" fill="none" stroke="#000" stroke-width="2"/><path d="M6 26 L12 4" stroke="#f00" stroke-width="1.8"/><path d="M13 26 L20 4" stroke="#0c0" stroke-width="1.8"/><path d="M21 26 L28 4" stroke="#00f" stroke-width="1.8"/></svg>
<div class="t" style="left:1091.00px;width:100px;text-align:center;top:93.34px;font-size:12px;color:#dedede;">Построение</div>
<div class="t" style="left:1091.00px;width:100px;text-align:center;top:105.84px;font-size:12px;color:#dedede;">графиков</div>
<svg style="left:1194px;top:57px" width="32" height="32" viewBox="0 0 32 32"><rect x="0" y="0" width="2" height="32" fill="#ddd"/><rect x="4" y="0" width="28" height="18" fill="#fff"/><path d="M23 1 L31 9 H23Z" fill="#6cf" stroke="#00c" stroke-width="1"/><path d="M0 10 H14" stroke="#3aa0ff" stroke-width="3.5"/><path d="M12 5 L19 10 L12 15Z" fill="#3aa0ff"/><rect x="4" y="18" width="28" height="14" fill="#0000e0"/><text x="6" y="30" font-family="Liberation Mono" font-weight="bold" font-size="12" fill="#fff" textLength="24" lengthAdjust="spacingAndGlyphs">KML</text></svg>
<div class="t" style="left:1160.00px;width:100px;text-align:center;top:93.34px;font-size:12px;color:#dedede;">Экспорт</div>
<div class="t" style="left:1160.00px;width:100px;text-align:center;top:105.84px;font-size:12px;color:#dedede;">в *.KML</div>
<svg style="left:1260px;top:57px" width="32" height="32" viewBox="0 0 32 32"><rect width="32" height="32" fill="#fff"/><rect x="1" y="2" width="9" height="9" rx="3" fill="#ddd" stroke="#888" stroke-width="1"/><path d="M14 3 H24 V12" fill="none" stroke="#000" stroke-width="2"/><path d="M20 10 H28 L24 14Z" fill="#000"/><ellipse cx="12" cy="25" rx="8" ry="6" fill="#fff" stroke="#1a78e0" stroke-width="2.2"/><ellipse cx="23" cy="25" rx="7" ry="6" fill="#fff" stroke="#1a78e0" stroke-width="2.2"/><path d="M17 19 V31" stroke="#1a78e0" stroke-width="1"/></svg>
<div class="t" style="left:1226.00px;width:100px;text-align:center;top:93.34px;font-size:12px;color:#dedede;">Клонировать</div>
<div class="t" style="left:1226.00px;width:100px;text-align:center;top:105.84px;font-size:12px;color:#dedede;">объекты</div>
<svg style="left:1321px;top:52px" width="16" height="16" viewBox="0 0 16 16"><rect x="0" y="0" width="16" height="16" fill="#fff"/><text x="0" y="7" font-size="7" font-family="Liberation Sans" fill="#f00">2D</text><text x="4" y="15" font-size="7" font-family="Liberation Sans" fill="#00f">3D</text><path d="M1 12 H4" stroke="#0aa" stroke-width="1"/></svg>
<svg style="left:1321px;top:76px" width="16" height="16" viewBox="0 0 16 16"><rect x="0" y="0" width="16" height="16" fill="#fff"/><text x="0" y="7" font-size="7" font-family="Liberation Sans" fill="#00f">3D</text><text x="4" y="15" font-size="7" font-family="Liberation Sans" fill="#f00">2D</text><path d="M1 12 H4" stroke="#0aa" stroke-width="1"/></svg>
<svg style="left:1321px;top:100px" width="16" height="16" viewBox="0 0 16 16"><rect x="0" y="0" width="16" height="16" fill="#fff"/><rect x="2" y="1" width="13" height="14" rx="4" fill="none" stroke="#0a0" stroke-width="1.2"/><circle cx="10" cy="5" r="2" fill="#1a8cf0"/><path d="M1 10 L1 16 L4 14Z" fill="#000"/></svg>
<svg style="left:1351px;top:52px" width="16" height="16" viewBox="0 0 16 16"><rect x="0" y="0" width="16" height="16" fill="#fff"/><path d="M4 3 Q10 0 11 5 Q12 9 6 9 Q3 12 8 14 Q13 15 13 11" fill="none" stroke="#c00" stroke-width="1.1"/></svg>
<svg style="left:1351px;top:76px" width="16" height="16" viewBox="0 0 16 16"><rect x="0" y="0" width="16" height="16" fill="#fff"/><path d="M1 14 Q4 3 15 2 Q12 13 1 14Z" fill="none" stroke="#900" stroke-width="1.1"/><circle cx="8" cy="8" r="2" fill="#0cc" stroke="#000" stroke-width="0.7"/></svg>
<svg style="left:1351px;top:100px" width="16" height="16" viewBox="0 0 16 16"><rect x="0" y="0" width="16" height="16" fill="#fff"/><path d="M1 15 L8 1 L15 15Z M8 1 V15" fill="none" stroke="#555" stroke-width="1"/><path d="M8 1 L15 15 H8Z" fill="none" stroke="#1a8cf0" stroke-width="1"/><circle cx="8" cy="11" r="1.5" fill="#0cc" stroke="#000" stroke-width="0.7"/></svg>
<svg style="left:1387px;top:52px" width="17" height="16" viewBox="0 0 17 16"><rect width="17" height="16" fill="#fff"/><path d="M1 10 L9 2 L16 7 L8 15Z" fill="#2c5aa8"/><path d="M2 9 L9 3 L15 7 L8 13Z" fill="#6ea8f0"/><circle cx="9" cy="8" r="2.5" fill="#f4d000"/></svg>
<div class="t" style="left:1406px;top:54.34px;font-size:12px;color:#e6e6e6;">Помощь</div>
<svg style="left:1387px;top:76px" width="17" height="16" viewBox="0 0 17 16"><rect width="17" height="16" fill="#fff"/><circle cx="8.5" cy="8" r="6.5" fill="#1848b8"/><rect x="7.5" y="7" width="2.2" height="5.5" fill="#fff"/><circle cx="8.6" cy="4.6" r="1.3" fill="#fff"/></svg>
<div class="t" style="left:1406px;top:78.34px;font-size:12px;color:#e6e6e6;">О программе...</div>
<div class="r" style="left:0px;top:142px;width:1918px;height:2px;background:#555555;"></div>
<div class="r" style="left:0px;top:144px;width:1918px;height:1px;background:#8a8a8a;"></div>
<div class="r" style="left:0px;top:145px;width:1918px;height:2px;background:#555555;"></div>
<div class="r" style="left:0px;top:147px;width:394px;height:795px;background:#5f5f5f;"></div>
<div class="r" style="left:0px;top:147px;width:394px;height:18px;background:#7a7a7a;"></div>
<div class="t" style="left:5px;top:149.84px;font-size:12px;color:#e6e6e6;">Свойства</div>
<div class="r" style="left:394px;top:147px;width:5px;height:795px;background:#545454;"></div>
<div class="r" style="left:399px;top:147px;width:1519px;height:795px;background:#7a7a7a;"></div>
<div class="r" style="left:399px;top:147px;width:1519px;height:20px;background:#4d4d4d;"></div>
<div class="r" style="left:399px;top:147px;width:2px;height:795px;background:#7a7a7a;"></div>
<div class="r" style="left:400px;top:148px;width:99px;height:18px;background:#4f4f4f;border:1px solid #7a7a7a;box-sizing:border-box;"></div>
<div class="r" style="left:498px;top:148px;width:372px;height:18px;background:#4f4f4f;border:1px solid #7a7a7a;box-sizing:border-box;"></div>
<div class="r" style="left:869px;top:148px;width:443px;height:18px;background:#6f6f6f;"></div>
<div class="r" style="left:399px;top:166px;width:1519px;height:1px;background:#7a7a7a;"></div>
<div class="t" style="left:420.4px;top:150.84px;font-size:12px;color:#c8c8c8;transform:scaleX(0.9421);transform-origin:0 0;">Без имени0*</div>
<div class="t" style="left:511.25px;top:150.84px;font-size:12px;color:#c8c8c8;transform:scaleX(0.9118);transform-origin:0 0;">4912.304.ИИ.4_0.0004-0-ИГДИ-Г.АД.401.ПК0-ПК1.ТП.2000.02.00.dwg*</div>
<div class="t" style="left:893.4px;top:150.84px;font-size:12px;color:#f0f0f0;transform:scaleX(0.9164);transform-origin:0 0;">4912.301.ИИ.1_0.0004-0-ИГДИ-Г.СГ.008.ПК0-ПК51.ТП.1000-2000.02.01.dwg*</div>
<svg style="position:absolute;left:1298px;top:152px" width="10" height="10" viewBox="0 0 10 10"><path d="M1 1 L9 9 M9 1 L1 9" stroke="#eee" stroke-width="1.3"/></svg>
<svg style="position:absolute;left:1902px;top:154px" width="11" height="7" viewBox="0 0 11 7"><path d="M0 0 H11 L5.5 6Z" fill="#e6e6e6"/></svg>
<svg style="left:401px;top:167px" width="1517" height="751" viewBox="401 167 1517 751">
<rect x="401" y="167" width="1517" height="751" fill="#000"/>
<rect x="408.75" y="172.5" width="23.75" height="15" rx="7.5" fill="#2a2a2a" fill-opacity="0.9"/>
<text x="420.625" y="185.2" text-anchor="middle" fill="#959595" font-family="Liberation Sans" font-size="11.5">+</text>
<rect x="437.5" y="172.5" width="53.75" height="15" rx="7.5" fill="#2a2a2a" fill-opacity="0.9"/>
<text x="464.375" y="185.2" text-anchor="middle" fill="#959595" font-family="Liberation Sans" font-size="11.5">Сверху</text>
<rect x="496.25" y="172.5" width="70.75" height="15" rx="7.5" fill="#2a2a2a" fill-opacity="0.9"/>
<text x="531.625" y="185.2" text-anchor="middle" fill="#959595" font-family="Liberation Sans" font-size="11.5">2D-каркас</text>
<rect x="572" y="172.5" width="150" height="15" rx="7.5" fill="#2a2a2a" fill-opacity="0.9"/>
<text x="647.0" y="185.2" text-anchor="middle" fill="#959595" font-family="Liberation Sans" font-size="11.5">--- нет связанных видов ---</text>
<polyline points="746,177 776,171 785,171 800,180 880,200 913,206 947.8,213 969,226" fill="none" stroke="#cf7a1f" stroke-width="1.4" stroke-linejoin="round"/>
<polyline points="997.5,246.25 1010,262 1021,300 1011,335 997.5,392.5 993.75,423.75 1002.5,448.75 1025,481.25" fill="none" stroke="#cf7a1f" stroke-width="1.4" stroke-linejoin="round"/>
<polyline points="955,167.5 966,175 1015,193.75 1040,200 1052.5,208.75 1061,243.75 1042.5,290 1028.75,360 1030,380 1043.75,395" fill="none" stroke="#cf7a1f" stroke-width="1.4" stroke-linejoin="round"/>
<polyline points="735,227.5 781,245 815,247.5 870.8,251 911,263.75 932.4,283.2 957.5,310 970,342.5 971,400 976.25,425 980,475 990,496.25 1007.5,512.5 1016.25,517" fill="none" stroke="#cf7a1f" stroke-width="1.4" stroke-linejoin="round"/>
<polyline points="719.5,297 742.5,319 840,326 868.75,360 886.3,379.7 900.1,415.5 901.3,484.8 890.9,531 871.25,560 866.25,570 861.25,617.5 839.75,631.25 820,645 808.75,653.75 780,648.75 730,652.5 689.3,665.6 630,679" fill="none" stroke="#cf7a1f" stroke-width="1.4" stroke-linejoin="round"/>
<polyline points="702.5,371 720,380 732,395 739,420 740,452.5 755,498.75 753.75,508.75 743.75,540 746.25,557.5 741.25,576.25 700,586.25 650,593.25" fill="none" stroke="#cf7a1f" stroke-width="1.4" stroke-linejoin="round"/>
<polyline points="609.9,764.5 646.2,768 710.9,757.2 759.4,739.7 820,720.8 844.3,716.8 882,731 933.2,710.6 975.8,689.9" fill="none" stroke="#cf7a1f" stroke-width="1.4" stroke-linejoin="round"/>
<polyline points="586.3,863 606.4,875.3 651.6,859.6 710.9,850.2 764.8,839.4 820,820.5 873.9,801.1" fill="none" stroke="#cf7a1f" stroke-width="1.4" stroke-linejoin="round"/>
<polyline points="904.9,789.6 927.8,780.1 956.1,775.5" fill="none" stroke="#cf7a1f" stroke-width="1.4" stroke-linejoin="round"/>
<polyline points="805,918 820,909.5 847,896 895.5,891.1 931.8,879.3" fill="none" stroke="#cf7a1f" stroke-width="1.4" stroke-linejoin="round"/>
<polyline points="1086.4,167.5 1089.5,203.4" fill="none" stroke="#cf7a1f" stroke-width="1.4" stroke-linejoin="round"/>
<polyline points="753.75,508.75 760,509" fill="none" stroke="#cf7a1f" stroke-width="1.2" stroke-linejoin="round"/>
<polyline points="957,310 961,305" fill="none" stroke="#cf7a1f" stroke-width="1.2" stroke-linejoin="round"/>
<polyline points="755.5,741.5 758,747.5" fill="none" stroke="#cf7a1f" stroke-width="1.2" stroke-linejoin="round"/>
<polyline points="783.6,167 610.5,918" fill="none" stroke="#fff" stroke-width="1.3" stroke-linejoin="round"/>
<polyline points="1063.9,167 888.6,918" fill="none" stroke="#fff" stroke-width="1.3" stroke-linejoin="round"/>
<polyline points="934.2,167 902.5,300 886.3,357.8 873.6,385.5 860.9,422.5 853.9,447.9 844.7,484.8 831,531 807,635 787.7,712 766.5,839 758,875 751,918" fill="none" stroke="#fff" stroke-width="1.3" stroke-dasharray="8,4" stroke-linejoin="round"/>
<polyline points="955.5,167 927.9,300 909.4,350.8 895.5,387.8 879.4,429.4 872.4,461.7 860.9,517.2 855,531.5 830,635 805,712 782,839 772.5,918" fill="none" stroke="#fff" stroke-width="1.3" stroke-dasharray="8,4" stroke-linejoin="round"/>
<polyline points="990,166.6 1094.1,182.5" fill="none" stroke="#fff" stroke-width="1.3" stroke-dasharray="9,5" stroke-linejoin="round"/>
<polyline points="1035,176.4 1093.2,189.5" fill="none" stroke="#fff" stroke-width="1.3" stroke-dasharray="9,5" stroke-linejoin="round"/>
<polyline points="924,167 748.5,918" fill="none" stroke="#ff0000" stroke-width="1.6" stroke-linejoin="round"/>
<polyline points="669,386 870,395" fill="none" stroke="#ff0000" stroke-width="1.8" stroke-linejoin="round"/>
<polyline points="508.4,855.6 569.4,855.6 758.9,877.1" fill="none" stroke="#ff0000" stroke-width="1.8" stroke-linejoin="round"/>
<polyline points="878.2,334.7 890.9,338.1" fill="none" stroke="#ff0000" stroke-width="1.3" stroke-linejoin="round"/>
<polyline points="799.8,665.6 813.3,667" fill="none" stroke="#ff0000" stroke-width="1.3" stroke-linejoin="round"/>
<polyline points="865,444.25 1129.4,437.6" fill="none" stroke="#e6e6e6" stroke-width="1.5" stroke-linejoin="round"/>
<g fill="none" stroke="#fff" stroke-width="1.4"><circle cx="781" cy="201" r="5.2"/><circle cx="886" cy="229" r="5.2"/><circle cx="964" cy="183" r="5.2"/><circle cx="1068.8" cy="206" r="5.2"/><circle cx="1013" cy="261" r="5.2"/><circle cx="944.5" cy="295.5" r="5.2"/><circle cx="793" cy="308" r="5.2"/><circle cx="1048" cy="329.4" r="5.2"/><circle cx="727" cy="353" r="5.2"/><circle cx="980" cy="342.5" r="5.2"/><circle cx="848" cy="360.5" r="5.2"/><circle cx="911" cy="388" r="5.2"/><circle cx="771" cy="410" r="5.2"/><circle cx="1017.5" cy="417" r="5.2"/><circle cx="805" cy="470" r="5.2"/><circle cx="706.25" cy="474.25" r="5.2"/><circle cx="939.25" cy="467" r="5.2"/><circle cx="969.5" cy="489.5" r="5.2"/><circle cx="875.5" cy="506.25" r="5.2"/><circle cx="922.5" cy="537.5" r="5.2"/><circle cx="754.5" cy="539.25" r="5.2"/><circle cx="674.5" cy="583.75" r="5.2"/><circle cx="793.75" cy="592" r="5.2"/><circle cx="866.25" cy="599.25" r="5.2"/><circle cx="959.5" cy="613.75" r="5.2"/><circle cx="711.75" cy="643.75" r="5.2"/><circle cx="911.25" cy="652" r="5.2"/><circle cx="652.2" cy="688.5" r="5.2"/><circle cx="768.8" cy="688.5" r="5.2"/><circle cx="896.3" cy="710" r="5.2"/><circle cx="937.8" cy="696" r="5.2"/><circle cx="712.2" cy="763.4" r="5.2"/><circle cx="807.9" cy="758.6" r="5.2"/><circle cx="867.2" cy="783.6" r="5.2"/><circle cx="941.3" cy="777.4" r="5.2"/><circle cx="624.1" cy="810.3" r="5.2"/><circle cx="738.4" cy="818.4" r="5.2"/><circle cx="858.5" cy="840.2" r="5.2"/><circle cx="662.4" cy="886.6" r="5.2"/><circle cx="796.6" cy="885.2" r="5.2"/><circle cx="901.6" cy="886" r="5.2"/><circle cx="590.2" cy="914.9" r="5.2"/></g>
<g fill="#fff"><circle cx="795" cy="183" r="2.3"/><circle cx="757" cy="205.5" r="2.3"/><circle cx="865.75" cy="227" r="2.3"/><circle cx="935.5" cy="214" r="2.3"/><circle cx="761" cy="261" r="2.3"/><circle cx="1052.8" cy="235.5" r="2.3"/><circle cx="991.5" cy="268.75" r="2.3"/><circle cx="706.5" cy="337.5" r="2.3"/><circle cx="901" cy="301" r="2.3"/><circle cx="1049.5" cy="313.75" r="2.3"/><circle cx="981" cy="322" r="2.3"/><circle cx="752" cy="378.75" r="2.3"/><circle cx="980" cy="366" r="2.3"/><circle cx="1015" cy="391.5" r="2.3"/><circle cx="897.5" cy="416.5" r="2.3"/><circle cx="828" cy="423" r="2.3"/><circle cx="772.5" cy="430" r="2.3"/><circle cx="718.25" cy="440.75" r="2.3"/><circle cx="685" cy="450.75" r="2.3"/><circle cx="955.5" cy="430" r="2.3"/><circle cx="820.5" cy="478.25" r="2.3"/><circle cx="878.75" cy="494.5" r="2.3"/><circle cx="939.5" cy="493.75" r="2.3"/><circle cx="1005.5" cy="492.5" r="2.3"/><circle cx="686.25" cy="499.25" r="2.3"/><circle cx="817.5" cy="520" r="2.3"/><circle cx="732.5" cy="537.5" r="2.3"/><circle cx="967.5" cy="540.5" r="2.3"/><circle cx="672" cy="551.25" r="2.3"/><circle cx="871.25" cy="563.75" r="2.3"/><circle cx="763.75" cy="582.5" r="2.3"/><circle cx="670.5" cy="615" r="2.3"/><circle cx="815" cy="619.5" r="2.3"/><circle cx="896.75" cy="617.5" r="2.3"/><circle cx="985" cy="615.5" r="2.3"/><circle cx="752.5" cy="657.5" r="2.3"/><circle cx="674.5" cy="682.6" r="2.3"/><circle cx="844.3" cy="673.1" r="2.3"/><circle cx="911.6" cy="675.8" r="2.3"/><circle cx="626" cy="698.5" r="2.3"/><circle cx="721.1" cy="714.6" r="2.3"/><circle cx="812" cy="722.2" r="2.3"/><circle cx="956.1" cy="713.3" r="2.3"/><circle cx="668.6" cy="733.8" r="2.3"/><circle cx="879.3" cy="733.8" r="2.3"/><circle cx="928.3" cy="756.4" r="2.3"/><circle cx="685.8" cy="782.8" r="2.3"/><circle cx="618.7" cy="794.4" r="2.3"/><circle cx="928.3" cy="809.8" r="2.3"/><circle cx="825.4" cy="833.5" r="2.3"/><circle cx="878.7" cy="851.5" r="2.3"/><circle cx="706.3" cy="858.8" r="2.3"/><circle cx="645.7" cy="859.6" r="2.3"/><circle cx="769.6" cy="870.4" r="2.3"/><circle cx="581.6" cy="886.6" r="2.3"/><circle cx="925" cy="897.3" r="2.3"/><circle cx="724.4" cy="906.8" r="2.3"/><circle cx="636.8" cy="916.2" r="2.3"/><circle cx="1021.3" cy="171.5" r="2.3"/></g>
<circle cx="870" cy="395" r="3" fill="#ff0000"/><circle cx="758.9" cy="877.1" r="3" fill="#ff0000"/>
<circle cx="840" cy="326" r="2.2" fill="#000" stroke="#ccc" stroke-width="1"/>
<circle cx="858.75" cy="444.25" r="7" fill="none" stroke="#fff" stroke-width="1.5"/><circle cx="858.75" cy="444.25" r="3.8" fill="#fff"/>
<g fill="none" stroke="#fff" stroke-width="1.1"><path d="M777,181.5 L784,185 L777,188.5 Z"/><path d="M760.5,254.0 L767.5,257.5 L760.5,261.0 Z"/><path d="M743,327.5 L750,331 L743,334.5 Z"/><path d="M726.5,399.5 L733.5,403 L726.5,406.5 Z"/><path d="M709.5,472.5 L716.5,476 L709.5,479.5 Z"/><path d="M692.5,545.5 L699.5,549 L692.5,552.5 Z"/><path d="M675.75,617.5 L682.75,621 L675.75,624.5 Z"/><path d="M659.4,691.7 L666.4,695.2 L659.4,698.7 Z"/><path d="M641.9,763.1 L648.9,766.6 L641.9,770.1 Z"/><path d="M625.2,836.5 L632.2,840 L625.2,843.5 Z"/><path d="M608.2,909.2 L615.2,912.7 L608.2,916.2 Z"/><path d="M1049,208.5 L1056,212 L1049,215.5 Z"/><path d="M1032,280.25 L1039,283.75 L1032,287.25 Z"/><path d="M1014.5,354.0 L1021.5,357.5 L1014.5,361.0 Z"/><path d="M997.5,426.5 L1004.5,430 L997.5,433.5 Z"/><path d="M980.75,499.0 L987.75,502.5 L980.75,506.0 Z"/><path d="M964,571.5 L971,575 L964,578.5 Z"/><path d="M947,644.0 L954,647.5 L947,651.0 Z"/><path d="M930.2,717.3 L937.2,720.8 L930.2,724.3 Z"/><path d="M913.2,790.1 L920.2,793.6 L913.2,797.1 Z"/><path d="M896.5,862.3 L903.5,865.8 L896.5,869.3 Z"/></g>
<path d="M904.5,195 L922.5,195 L913.5,210 Z" fill="#fff"/>
<path d="M866,360 L884,360 L875,375 Z" fill="#fff"/>
<path d="M828,525 L846,525 L837,540 Z" fill="#fff"/>
<path d="M789,690 L807,690 L798,706 Z" fill="#fff"/>
<path d="M751,856 L769,856 L760,872 Z" fill="#fff"/>
<defs><path id="gl48" d="M1 0 H3 Q4 0 4 2 V8 Q4 10 3 10 H1 Q0 10 0 8 V2 Q0 0 1 0Z" vector-effect="non-scaling-stroke"/><path id="gl49" d="M0.8 2.2 L3.2 0 V10" vector-effect="non-scaling-stroke"/><path id="gl50" d="M0 2.3 Q0.3 0 2 0 Q4 0 4 2.5 Q4 4 2.7 5.5 L0 10 H4" vector-effect="non-scaling-stroke"/><path id="gl51" d="M0.3 0 H4 L1.6 4 Q4 4 4 7 Q4 10 2 10 Q0.6 10 0 9" vector-effect="non-scaling-stroke"/><path id="gl52" d="M3 10 V0 L0 7 H4" vector-effect="non-scaling-stroke"/><path id="gl53" d="M3.8 0 H0.8 L0.4 4.3 Q1 3.8 2 3.8 Q4 3.8 4 7 Q4 10 2 10 Q0.6 10 0 9" vector-effect="non-scaling-stroke"/><path id="gl54" d="M3.8 0.5 Q3 0 2 0.3 Q0 1.5 0 6.5 Q0 10 2 10 Q4 10 4 7.2 Q4 4.6 2 4.6 Q0.7 4.6 0 6" vector-effect="non-scaling-stroke"/><path id="gl55" d="M0 0 H4 Q2.4 4 1.4 10" vector-effect="non-scaling-stroke"/><path id="gl56" d="M2 4.6 Q0.3 4.6 0.3 2.3 Q0.3 0 2 0 Q3.7 0 3.7 2.3 Q3.7 4.6 2 4.6 Q0 4.6 0 7.3 Q0 10 2 10 Q4 10 4 7.3 Q4 4.6 2 4.6Z" vector-effect="non-scaling-stroke"/><path id="gl57" d="M4 3.5 Q3.4 5.4 2 5.4 Q0 5.4 0 2.8 Q0 0 2 0 Q4 0 4 3 Q4 9 0.3 9.7" vector-effect="non-scaling-stroke"/><path id="gl46" d="M0.4 9.5 L0.6 10" vector-effect="non-scaling-stroke"/><path id="gl45" d="M0.3 5.5 H3.7" vector-effect="non-scaling-stroke"/><path id="gl43" d="M0 5.5 H4 M2 3.5 V7.5" vector-effect="non-scaling-stroke"/><path id="gl66" d="M0 10 V0 H2.3 Q3.7 0 3.7 2.4 Q3.7 4.7 2.3 4.7 H0 M2.3 4.7 Q4 4.7 4 7.3 Q4 10 2.3 10 H0" vector-effect="non-scaling-stroke"/><path id="gl1055" d="M0 10 V0 H4 V10" vector-effect="non-scaling-stroke"/><path id="gl1050" d="M0 0 V10 M4 0 L0 6 M1.5 4.7 L4 10" vector-effect="non-scaling-stroke"/><path id="gl1057" d="M4 1.3 Q3.5 0 2 0 Q0 0 0 5 Q0 10 2 10 Q3.5 10 4 8.7" vector-effect="non-scaling-stroke"/><path id="gl1082" d="M0 3 V10 M3.6 3 L0 7 M1.3 5.7 L3.6 10" vector-effect="non-scaling-stroke"/><path id="gl1074" d="M1.2 5.2 Q0 5.6 0 7.6 Q0 10 2 10 Q3.8 10 3.8 7.6 Q3.8 5.2 1.8 5 Q3.2 4 3.2 1.8 Q3.2 0 2.2 0 Q1.2 0 1.2 1.6 Z" vector-effect="non-scaling-stroke"/><path id="gl1088" d="M0 13 V3 M0 4.3 Q0.8 3 2 3 Q4 3 4 6.5 Q4 10 2 10 Q0.8 10 0 8.7" vector-effect="non-scaling-stroke"/><path id="gl1083" d="M0 10 L2.2 3.3 Q2.4 3 3 3 H4 V10" vector-effect="non-scaling-stroke"/><path id="gl1080" d="M0 3 V8.3 Q0 10 1.9 10 Q3.7 10 4 8.2 M4 3 V10" vector-effect="non-scaling-stroke"/><path id="gl1089" d="M3.8 3.8 Q3.2 3 2 3 Q0 3 0 6.5 Q0 10 2 10 Q3.2 10 3.8 9.2" vector-effect="non-scaling-stroke"/><path id="gl1090" d="M0 10 V3 M0 4.3 Q0.5 3 1.3 3 Q2.2 3 2.2 4.5 V10 M2.2 4.5 Q2.2 3 3.1 3 Q4 3 4 4.5 V10" vector-effect="non-scaling-stroke"/></defs>
<g transform="translate(581.00,177.30) skewX(-15) scale(1.5180,1.4) translate(0,-10)" fill="none" stroke="#fff" stroke-width="1.25" stroke-linecap="round" stroke-linejoin="round"><use href="#gl1055" x="0.00"/><use href="#gl1050" x="6.80"/><use href="#gl49" x="13.60"/><use href="#gl53" x="20.40"/><use href="#gl43" x="27.20"/><use href="#gl53" x="33.70"/><use href="#gl54" x="40.50"/><use href="#gl46" x="47.30"/><use href="#gl57" x="50.30"/><use href="#gl55" x="57.10"/></g><g transform="translate(806.00,181.00) skewX(-15) scale(1.4108,1.4) translate(0,-10)" fill="none" stroke="#fff" stroke-width="1.25" stroke-linecap="round" stroke-linejoin="round"><use href="#gl51" x="0.00"/><use href="#gl54" x="6.80"/><use href="#gl52" x="13.60"/><use href="#gl46" x="20.40"/><use href="#gl48" x="23.40"/><use href="#gl56" x="30.20"/></g><g transform="translate(863.00,190.80) skewX(-15) scale(1.5213,1.4) translate(0,-10)" fill="none" stroke="#fff" stroke-width="1.25" stroke-linecap="round" stroke-linejoin="round"><use href="#gl66" x="0.00"/><use href="#gl45" x="6.80"/><use href="#gl56" x="12.80"/><use href="#gl51" x="19.60"/><use href="#gl48" x="26.40"/></g><g transform="translate(715.00,224.00) skewX(-15) scale(1.3815,1.4) translate(0,-10)" fill="none" stroke="#fff" stroke-width="1.25" stroke-linecap="round" stroke-linejoin="round"><use href="#gl51" x="0.00"/><use href="#gl54" x="6.80"/><use href="#gl52" x="13.60"/><use href="#gl46" x="20.40"/><use href="#gl48" x="23.40"/><use href="#gl56" x="30.20"/></g><g transform="translate(845.40,217.70) skewX(-15) scale(1.2821,1.4) translate(0,-10)" fill="none" stroke="#fff" stroke-width="1.25" stroke-linecap="round" stroke-linejoin="round"><use href="#gl51" x="0.00"/><use href="#gl54" x="6.80"/><use href="#gl52" x="13.60"/><use href="#gl46" x="20.40"/><use href="#gl49" x="23.40"/><use href="#gl52" x="30.20"/></g><g transform="translate(946.00,211.50) skewX(-15) scale(1.3962,1.4) translate(0,-10)" fill="none" stroke="#fff" stroke-width="1.25" stroke-linecap="round" stroke-linejoin="round"><use href="#gl51" x="0.00"/><use href="#gl54" x="6.80"/><use href="#gl52" x="13.60"/><use href="#gl46" x="20.40"/><use href="#gl48" x="23.40"/><use href="#gl53" x="30.20"/></g><g transform="translate(1015.00,200.70) skewX(-15) scale(1.3231,1.4) translate(0,-10)" fill="none" stroke="#fff" stroke-width="1.25" stroke-linecap="round" stroke-linejoin="round"><use href="#gl51" x="0.00"/><use href="#gl54" x="6.80"/><use href="#gl51" x="13.60"/><use href="#gl46" x="20.40"/><use href="#gl49" x="23.40"/><use href="#gl48" x="30.20"/></g><g transform="translate(1077.60,175.60) skewX(-15) scale(1.3757,1.4) translate(0,-10)" fill="none" stroke="#fff" stroke-width="1.25" stroke-linecap="round" stroke-linejoin="round"><use href="#gl51" x="0.00"/><use href="#gl54" x="6.80"/><use href="#gl51" x="13.60"/><use href="#gl46" x="20.40"/><use href="#gl48" x="23.40"/><use href="#gl57" x="30.20"/></g><g transform="translate(1029.00,181.70) skewX(-15) scale(1.3122,1.4) translate(0,-10)" fill="none" stroke="#fff" stroke-width="1.25" stroke-linecap="round" stroke-linejoin="round"><use href="#gl50" x="0.00"/></g><g transform="translate(1063.50,233.90) skewX(-15) scale(1.3962,1.4) translate(0,-10)" fill="none" stroke="#fff" stroke-width="1.25" stroke-linecap="round" stroke-linejoin="round"><use href="#gl51" x="0.00"/><use href="#gl54" x="6.80"/><use href="#gl51" x="13.60"/><use href="#gl46" x="20.40"/><use href="#gl54" x="23.40"/><use href="#gl57" x="30.20"/></g><g transform="translate(758.20,255.40) skewX(-15) scale(1.5045,1.4) translate(0,-10)" fill="none" stroke="#fff" stroke-width="1.25" stroke-linecap="round" stroke-linejoin="round"><use href="#gl1083" x="0.00"/><use href="#gl1080" x="6.40"/><use href="#gl1089" x="13.00"/><use href="#gl1090" x="19.20"/><use href="#gl1074" x="25.80"/><use href="#gl46" x="32.20"/></g><g transform="translate(853.00,245.20) skewX(-15) scale(1.0415,1.4) translate(0,-10)" fill="none" stroke="#fff" stroke-width="1.25" stroke-linecap="round" stroke-linejoin="round"><use href="#gl49" x="0.00"/><use href="#gl49" x="6.80"/></g><g transform="translate(846.00,265.50) skewX(-15) scale(1.3228,1.4) translate(0,-10)" fill="none" stroke="#fff" stroke-width="1.25" stroke-linecap="round" stroke-linejoin="round"><use href="#gl48" x="0.00"/><use href="#gl46" x="6.80"/><use href="#gl49" x="9.80"/><use href="#gl48" x="16.60"/></g><g transform="translate(881.50,254.20) skewX(-15) scale(1.3122,1.4) translate(0,-10)" fill="none" stroke="#fff" stroke-width="1.25" stroke-linecap="round" stroke-linejoin="round"><use href="#gl52" x="0.00"/></g><g transform="translate(704.50,276.00) skewX(-15) scale(1.3962,1.4) translate(0,-10)" fill="none" stroke="#fff" stroke-width="1.25" stroke-linecap="round" stroke-linejoin="round"><use href="#gl51" x="0.00"/><use href="#gl54" x="6.80"/><use href="#gl52" x="13.60"/><use href="#gl46" x="20.40"/><use href="#gl54" x="23.40"/><use href="#gl53" x="30.20"/></g><g transform="translate(840.80,290.00) skewX(-15) scale(1.3757,1.4) translate(0,-10)" fill="none" stroke="#fff" stroke-width="1.25" stroke-linecap="round" stroke-linejoin="round"><use href="#gl51" x="0.00"/><use href="#gl54" x="6.80"/><use href="#gl52" x="13.60"/><use href="#gl46" x="20.40"/><use href="#gl53" x="23.40"/><use href="#gl55" x="30.20"/></g><g transform="translate(961.00,291.25) skewX(-15) scale(1.3231,1.4) translate(0,-10)" fill="none" stroke="#fff" stroke-width="1.25" stroke-linecap="round" stroke-linejoin="round"><use href="#gl51" x="0.00"/><use href="#gl54" x="6.80"/><use href="#gl52" x="13.60"/><use href="#gl46" x="20.40"/><use href="#gl49" x="23.40"/><use href="#gl53" x="30.20"/></g><g transform="translate(1060.40,312.10) skewX(-15) scale(1.3903,1.4) translate(0,-10)" fill="none" stroke="#fff" stroke-width="1.25" stroke-linecap="round" stroke-linejoin="round"><use href="#gl51" x="0.00"/><use href="#gl54" x="6.80"/><use href="#gl51" x="13.60"/><use href="#gl46" x="20.40"/><use href="#gl50" x="23.40"/><use href="#gl48" x="30.20"/></g><g transform="translate(670.00,326.00) skewX(-15) scale(1.3815,1.4) translate(0,-10)" fill="none" stroke="#fff" stroke-width="1.25" stroke-linecap="round" stroke-linejoin="round"><use href="#gl51" x="0.00"/><use href="#gl54" x="6.80"/><use href="#gl53" x="13.60"/><use href="#gl46" x="20.40"/><use href="#gl49" x="23.40"/><use href="#gl54" x="30.20"/></g><g transform="translate(810.00,320.00) skewX(-15) scale(1.3815,1.4) translate(0,-10)" fill="none" stroke="#fff" stroke-width="1.25" stroke-linecap="round" stroke-linejoin="round"><use href="#gl51" x="0.00"/><use href="#gl54" x="6.80"/><use href="#gl53" x="13.60"/><use href="#gl46" x="20.40"/><use href="#gl48" x="23.40"/><use href="#gl48" x="30.20"/></g><g transform="translate(892.50,342.50) skewX(-15) scale(1.5424,1.4) translate(0,-10)" fill="none" stroke="#fff" stroke-width="1.25" stroke-linecap="round" stroke-linejoin="round"><use href="#gl51" x="0.00"/><use href="#gl54" x="6.80"/><use href="#gl52" x="13.60"/><use href="#gl46" x="20.40"/><use href="#gl55" x="23.40"/><use href="#gl56" x="30.20"/></g><g transform="translate(952.50,337.50) skewX(-15) scale(1.4254,1.4) translate(0,-10)" fill="none" stroke="#fff" stroke-width="1.25" stroke-linecap="round" stroke-linejoin="round"><use href="#gl51" x="0.00"/><use href="#gl54" x="6.80"/><use href="#gl52" x="13.60"/><use href="#gl46" x="20.40"/><use href="#gl51" x="23.40"/><use href="#gl53" x="30.20"/></g><g transform="translate(912.50,370.00) skewX(-15) scale(1.4546,1.4) translate(0,-10)" fill="none" stroke="#fff" stroke-width="1.25" stroke-linecap="round" stroke-linejoin="round"><use href="#gl51" x="0.00"/><use href="#gl54" x="6.80"/><use href="#gl52" x="13.60"/><use href="#gl46" x="20.40"/><use href="#gl51" x="23.40"/><use href="#gl50" x="30.20"/></g><g transform="translate(762.50,376.00) skewX(-15) scale(1.3962,1.4) translate(0,-10)" fill="none" stroke="#fff" stroke-width="1.25" stroke-linecap="round" stroke-linejoin="round"><use href="#gl51" x="0.00"/><use href="#gl54" x="6.80"/><use href="#gl53" x="13.60"/><use href="#gl46" x="20.40"/><use href="#gl51" x="23.40"/><use href="#gl53" x="30.20"/></g><g transform="translate(816.00,384.00) skewX(-15) scale(1.5542,1.4) translate(0,-10)" fill="none" stroke="#fff" stroke-width="1.25" stroke-linecap="round" stroke-linejoin="round"><use href="#gl66" x="0.00"/><use href="#gl45" x="6.80"/><use href="#gl56" x="12.80"/><use href="#gl50" x="19.60"/><use href="#gl57" x="26.40"/></g><g transform="translate(1025.40,389.60) skewX(-15) scale(1.4108,1.4) translate(0,-10)" fill="none" stroke="#fff" stroke-width="1.25" stroke-linecap="round" stroke-linejoin="round"><use href="#gl51" x="0.00"/><use href="#gl54" x="6.80"/><use href="#gl51" x="13.60"/><use href="#gl46" x="20.40"/><use href="#gl54" x="23.40"/><use href="#gl55" x="30.20"/></g><g transform="translate(671.00,404.00) skewX(-15) scale(1.4108,1.4) translate(0,-10)" fill="none" stroke="#fff" stroke-width="1.25" stroke-linecap="round" stroke-linejoin="round"><use href="#gl51" x="0.00"/><use href="#gl54" x="6.80"/><use href="#gl53" x="13.60"/><use href="#gl46" x="20.40"/><use href="#gl48" x="23.40"/><use href="#gl55" x="30.20"/></g><g transform="translate(812.50,412.50) skewX(-15) scale(1.3523,1.4) translate(0,-10)" fill="none" stroke="#fff" stroke-width="1.25" stroke-linecap="round" stroke-linejoin="round"><use href="#gl51" x="0.00"/><use href="#gl54" x="6.80"/><use href="#gl53" x="13.60"/><use href="#gl46" x="20.40"/><use href="#gl49" x="23.40"/><use href="#gl54" x="30.20"/></g><g transform="translate(908.75,415.00) skewX(-15) scale(1.3523,1.4) translate(0,-10)" fill="none" stroke="#fff" stroke-width="1.25" stroke-linecap="round" stroke-linejoin="round"><use href="#gl51" x="0.00"/><use href="#gl54" x="6.80"/><use href="#gl53" x="13.60"/><use href="#gl46" x="20.40"/><use href="#gl48" x="23.40"/><use href="#gl49" x="30.20"/></g><g transform="translate(1034.30,430.50) skewX(-15) scale(1.4626,1.4) translate(0,-10)" fill="none" stroke="#fff" stroke-width="1.25" stroke-linecap="round" stroke-linejoin="round"><use href="#gl1057" x="0.00"/><use href="#gl1082" x="6.80"/><use href="#gl1074" x="13.00"/><use href="#gl46" x="19.40"/><use href="#gl50" x="22.40"/><use href="#gl52" x="29.20"/><use href="#gl1088" x="36.00"/><use href="#gl49" x="42.60"/><use href="#gl51" x="49.40"/><use href="#gl57" x="56.20"/></g><g transform="translate(662.50,433.75) skewX(-15) scale(1.3889,1.4) translate(0,-10)" fill="none" stroke="#fff" stroke-width="1.25" stroke-linecap="round" stroke-linejoin="round"><use href="#gl51" x="0.00"/><use href="#gl54" x="6.80"/><use href="#gl53" x="13.60"/><use href="#gl46" x="20.40"/><use href="#gl55" x="23.40"/><use href="#gl48" x="30.20"/></g><g transform="translate(768.75,455.00) skewX(-15) scale(1.3158,1.4) translate(0,-10)" fill="none" stroke="#fff" stroke-width="1.25" stroke-linecap="round" stroke-linejoin="round"><use href="#gl51" x="0.00"/><use href="#gl54" x="6.80"/><use href="#gl53" x="13.60"/><use href="#gl46" x="20.40"/><use href="#gl48" x="23.40"/><use href="#gl52" x="30.20"/></g><g transform="translate(928.75,457.50) skewX(-15) scale(1.3889,1.4) translate(0,-10)" fill="none" stroke="#fff" stroke-width="1.25" stroke-linecap="round" stroke-linejoin="round"><use href="#gl51" x="0.00"/><use href="#gl54" x="6.80"/><use href="#gl52" x="13.60"/><use href="#gl46" x="20.40"/><use href="#gl54" x="23.40"/><use href="#gl48" x="30.20"/></g><g transform="translate(1056.40,458.20) skewX(-15) scale(1.3114,1.4) translate(0,-10)" fill="none" stroke="#fff" stroke-width="1.25" stroke-linecap="round" stroke-linejoin="round"><use href="#gl51" x="0.00"/><use href="#gl54" x="6.80"/><use href="#gl53" x="13.60"/><use href="#gl46" x="20.40"/><use href="#gl49" x="23.40"/><use href="#gl49" x="30.20"/></g><g transform="translate(632.50,473.00) skewX(-15) scale(1.3889,1.4) translate(0,-10)" fill="none" stroke="#fff" stroke-width="1.25" stroke-linecap="round" stroke-linejoin="round"><use href="#gl51" x="0.00"/><use href="#gl54" x="6.80"/><use href="#gl53" x="13.60"/><use href="#gl46" x="20.40"/><use href="#gl54" x="23.40"/><use href="#gl53" x="30.20"/></g><g transform="translate(990.00,481.50) skewX(-15) scale(1.3523,1.4) translate(0,-10)" fill="none" stroke="#fff" stroke-width="1.25" stroke-linecap="round" stroke-linejoin="round"><use href="#gl51" x="0.00"/><use href="#gl54" x="6.80"/><use href="#gl52" x="13.60"/><use href="#gl46" x="20.40"/><use href="#gl51" x="23.40"/><use href="#gl53" x="30.20"/></g><g transform="translate(867.50,488.75) skewX(-15) scale(1.3523,1.4) translate(0,-10)" fill="none" stroke="#fff" stroke-width="1.25" stroke-linecap="round" stroke-linejoin="round"><use href="#gl51" x="0.00"/><use href="#gl54" x="6.80"/><use href="#gl53" x="13.60"/><use href="#gl46" x="20.40"/><use href="#gl49" x="23.40"/><use href="#gl55" x="30.20"/></g><g transform="translate(778.75,496.25) skewX(-15) scale(1.2792,1.4) translate(0,-10)" fill="none" stroke="#fff" stroke-width="1.25" stroke-linecap="round" stroke-linejoin="round"><use href="#gl51" x="0.00"/><use href="#gl54" x="6.80"/><use href="#gl53" x="13.60"/><use href="#gl46" x="20.40"/><use href="#gl49" x="23.40"/><use href="#gl48" x="30.20"/></g><g transform="translate(908.75,515.50) skewX(-15) scale(1.4254,1.4) translate(0,-10)" fill="none" stroke="#fff" stroke-width="1.25" stroke-linecap="round" stroke-linejoin="round"><use href="#gl51" x="0.00"/><use href="#gl54" x="6.80"/><use href="#gl52" x="13.60"/><use href="#gl46" x="20.40"/><use href="#gl55" x="23.40"/><use href="#gl48" x="30.20"/></g><g transform="translate(637.50,516.25) skewX(-15) scale(1.3523,1.4) translate(0,-10)" fill="none" stroke="#fff" stroke-width="1.25" stroke-linecap="round" stroke-linejoin="round"><use href="#gl51" x="0.00"/><use href="#gl54" x="6.80"/><use href="#gl53" x="13.60"/><use href="#gl46" x="20.40"/><use href="#gl53" x="23.40"/><use href="#gl52" x="30.20"/></g><g transform="translate(697.50,527.50) skewX(-15) scale(1.3889,1.4) translate(0,-10)" fill="none" stroke="#fff" stroke-width="1.25" stroke-linecap="round" stroke-linejoin="round"><use href="#gl51" x="0.00"/><use href="#gl54" x="6.80"/><use href="#gl53" x="13.60"/><use href="#gl46" x="20.40"/><use href="#gl54" x="23.40"/><use href="#gl51" x="30.20"/></g><g transform="translate(927.50,535.00) skewX(-15) scale(1.3523,1.4) translate(0,-10)" fill="none" stroke="#fff" stroke-width="1.25" stroke-linecap="round" stroke-linejoin="round"><use href="#gl51" x="0.00"/><use href="#gl54" x="6.80"/><use href="#gl52" x="13.60"/><use href="#gl46" x="20.40"/><use href="#gl55" x="23.40"/><use href="#gl49" x="30.20"/></g><g transform="translate(847.50,538.25) skewX(-15) scale(1.5213,1.4) translate(0,-10)" fill="none" stroke="#fff" stroke-width="1.25" stroke-linecap="round" stroke-linejoin="round"><use href="#gl66" x="0.00"/><use href="#gl45" x="6.80"/><use href="#gl56" x="12.80"/><use href="#gl50" x="19.60"/><use href="#gl56" x="26.40"/></g><g transform="translate(775.00,541.25) skewX(-15) scale(1.3889,1.4) translate(0,-10)" fill="none" stroke="#fff" stroke-width="1.25" stroke-linecap="round" stroke-linejoin="round"><use href="#gl51" x="0.00"/><use href="#gl54" x="6.80"/><use href="#gl53" x="13.60"/><use href="#gl46" x="20.40"/><use href="#gl51" x="23.40"/><use href="#gl53" x="30.20"/></g><g transform="translate(882.50,561.25) skewX(-15) scale(1.4254,1.4) translate(0,-10)" fill="none" stroke="#fff" stroke-width="1.25" stroke-linecap="round" stroke-linejoin="round"><use href="#gl51" x="0.00"/><use href="#gl54" x="6.80"/><use href="#gl52" x="13.60"/><use href="#gl46" x="20.40"/><use href="#gl57" x="23.40"/><use href="#gl57" x="30.20"/></g><g transform="translate(626.25,572.00) skewX(-15) scale(1.3889,1.4) translate(0,-10)" fill="none" stroke="#fff" stroke-width="1.25" stroke-linecap="round" stroke-linejoin="round"><use href="#gl51" x="0.00"/><use href="#gl54" x="6.80"/><use href="#gl53" x="13.60"/><use href="#gl46" x="20.40"/><use href="#gl54" x="23.40"/><use href="#gl48" x="30.20"/></g><g transform="translate(771.25,577.50) skewX(-15) scale(1.3523,1.4) translate(0,-10)" fill="none" stroke="#fff" stroke-width="1.25" stroke-linecap="round" stroke-linejoin="round"><use href="#gl51" x="0.00"/><use href="#gl54" x="6.80"/><use href="#gl53" x="13.60"/><use href="#gl46" x="20.40"/><use href="#gl51" x="23.40"/><use href="#gl53" x="30.20"/></g><g transform="translate(975.00,588.75) skewX(-15) scale(1.1341,1.4) translate(0,-10)" fill="none" stroke="#fff" stroke-width="1.25" stroke-linecap="round" stroke-linejoin="round"><use href="#gl49" x="0.00"/><use href="#gl53" x="6.80"/></g><g transform="translate(880.00,598.75) skewX(-15) scale(1.5244,1.4) translate(0,-10)" fill="none" stroke="#fff" stroke-width="1.25" stroke-linecap="round" stroke-linejoin="round"><use href="#gl1083" x="0.00"/><use href="#gl1080" x="6.40"/><use href="#gl1089" x="13.00"/><use href="#gl1090" x="19.20"/><use href="#gl1074" x="25.80"/><use href="#gl46" x="32.20"/></g><g transform="translate(1003.50,598.75) skewX(-15) scale(1.3122,1.4) translate(0,-10)" fill="none" stroke="#fff" stroke-width="1.25" stroke-linecap="round" stroke-linejoin="round"><use href="#gl52" x="0.00"/></g><g transform="translate(967.50,608.75) skewX(-15) scale(1.3349,1.4) translate(0,-10)" fill="none" stroke="#fff" stroke-width="1.25" stroke-linecap="round" stroke-linejoin="round"><use href="#gl48" x="0.00"/><use href="#gl46" x="6.80"/><use href="#gl49" x="9.80"/><use href="#gl52" x="16.60"/></g><g transform="translate(758.75,618.00) skewX(-15) scale(1.2792,1.4) translate(0,-10)" fill="none" stroke="#fff" stroke-width="1.25" stroke-linecap="round" stroke-linejoin="round"><use href="#gl51" x="0.00"/><use href="#gl54" x="6.80"/><use href="#gl53" x="13.60"/><use href="#gl46" x="20.40"/><use href="#gl49" x="23.40"/><use href="#gl48" x="30.20"/></g><g transform="translate(613.75,629.50) skewX(-15) scale(1.3889,1.4) translate(0,-10)" fill="none" stroke="#fff" stroke-width="1.25" stroke-linecap="round" stroke-linejoin="round"><use href="#gl51" x="0.00"/><use href="#gl54" x="6.80"/><use href="#gl53" x="13.60"/><use href="#gl46" x="20.40"/><use href="#gl50" x="23.40"/><use href="#gl50" x="30.20"/></g><g transform="translate(870.00,638.75) skewX(-15) scale(1.3889,1.4) translate(0,-10)" fill="none" stroke="#fff" stroke-width="1.25" stroke-linecap="round" stroke-linejoin="round"><use href="#gl51" x="0.00"/><use href="#gl54" x="6.80"/><use href="#gl52" x="13.60"/><use href="#gl46" x="20.40"/><use href="#gl56" x="23.40"/><use href="#gl48" x="30.20"/></g><g transform="translate(977.00,640.50) skewX(-15) scale(1.4035,1.4) translate(0,-10)" fill="none" stroke="#fff" stroke-width="1.25" stroke-linecap="round" stroke-linejoin="round"><use href="#gl51" x="0.00"/><use href="#gl54" x="6.80"/><use href="#gl52" x="13.60"/><use href="#gl46" x="20.40"/><use href="#gl55" x="23.40"/><use href="#gl53" x="30.20"/></g><g transform="translate(728.75,647.50) skewX(-15) scale(1.3889,1.4) translate(0,-10)" fill="none" stroke="#fff" stroke-width="1.25" stroke-linecap="round" stroke-linejoin="round"><use href="#gl51" x="0.00"/><use href="#gl54" x="6.80"/><use href="#gl52" x="13.60"/><use href="#gl46" x="20.40"/><use href="#gl56" x="23.40"/><use href="#gl53" x="30.20"/></g><g transform="translate(851.80,667.00) skewX(-15) scale(1.4020,1.4) translate(0,-10)" fill="none" stroke="#fff" stroke-width="1.25" stroke-linecap="round" stroke-linejoin="round"><use href="#gl51" x="0.00"/><use href="#gl54" x="6.80"/><use href="#gl52" x="13.60"/><use href="#gl46" x="20.40"/><use href="#gl56" x="23.40"/><use href="#gl53" x="30.20"/></g><g transform="translate(684.00,680.40) skewX(-15) scale(1.4254,1.4) translate(0,-10)" fill="none" stroke="#fff" stroke-width="1.25" stroke-linecap="round" stroke-linejoin="round"><use href="#gl51" x="0.00"/><use href="#gl54" x="6.80"/><use href="#gl52" x="13.60"/><use href="#gl46" x="20.40"/><use href="#gl56" x="23.40"/><use href="#gl53" x="30.20"/></g><g transform="translate(809.00,687.20) skewX(-15) scale(1.4400,1.4) translate(0,-10)" fill="none" stroke="#fff" stroke-width="1.25" stroke-linecap="round" stroke-linejoin="round"><use href="#gl51" x="0.00"/><use href="#gl54" x="6.80"/><use href="#gl52" x="13.60"/><use href="#gl46" x="20.40"/><use href="#gl56" x="23.40"/><use href="#gl54" x="30.20"/></g><g transform="translate(879.30,696.00) skewX(-15) scale(1.4663,1.4) translate(0,-10)" fill="none" stroke="#fff" stroke-width="1.25" stroke-linecap="round" stroke-linejoin="round"><use href="#gl51" x="0.00"/><use href="#gl54" x="6.80"/><use href="#gl52" x="13.60"/><use href="#gl46" x="20.40"/><use href="#gl55" x="23.40"/><use href="#gl50" x="30.20"/></g><g transform="translate(812.00,704.00) skewX(-15) scale(1.5542,1.4) translate(0,-10)" fill="none" stroke="#fff" stroke-width="1.25" stroke-linecap="round" stroke-linejoin="round"><use href="#gl66" x="0.00"/><use href="#gl45" x="6.80"/><use href="#gl56" x="12.80"/><use href="#gl50" x="19.60"/><use href="#gl55" x="26.40"/></g><g transform="translate(965.50,710.60) skewX(-15) scale(1.4663,1.4) translate(0,-10)" fill="none" stroke="#fff" stroke-width="1.25" stroke-linecap="round" stroke-linejoin="round"><use href="#gl51" x="0.00"/><use href="#gl54" x="6.80"/><use href="#gl52" x="13.60"/><use href="#gl46" x="20.40"/><use href="#gl50" x="23.40"/><use href="#gl55" x="30.20"/></g><g transform="translate(731.10,712.80) skewX(-15) scale(1.4283,1.4) translate(0,-10)" fill="none" stroke="#fff" stroke-width="1.25" stroke-linecap="round" stroke-linejoin="round"><use href="#gl51" x="0.00"/><use href="#gl54" x="6.80"/><use href="#gl52" x="13.60"/><use href="#gl46" x="20.40"/><use href="#gl55" x="23.40"/><use href="#gl53" x="30.20"/></g><g transform="translate(824.00,719.50) skewX(-15) scale(1.3815,1.4) translate(0,-10)" fill="none" stroke="#fff" stroke-width="1.25" stroke-linecap="round" stroke-linejoin="round"><use href="#gl51" x="0.00"/><use href="#gl54" x="6.80"/><use href="#gl52" x="13.60"/><use href="#gl46" x="20.40"/><use href="#gl54" x="23.40"/><use href="#gl48" x="30.20"/></g><g transform="translate(578.90,722.90) skewX(-15) scale(1.4371,1.4) translate(0,-10)" fill="none" stroke="#fff" stroke-width="1.25" stroke-linecap="round" stroke-linejoin="round"><use href="#gl51" x="0.00"/><use href="#gl54" x="6.80"/><use href="#gl52" x="13.60"/><use href="#gl46" x="20.40"/><use href="#gl56" x="23.40"/><use href="#gl57" x="30.20"/></g><g transform="translate(678.60,749.10) skewX(-15) scale(1.4254,1.4) translate(0,-10)" fill="none" stroke="#fff" stroke-width="1.25" stroke-linecap="round" stroke-linejoin="round"><use href="#gl51" x="0.00"/><use href="#gl54" x="6.80"/><use href="#gl52" x="13.60"/><use href="#gl46" x="20.40"/><use href="#gl54" x="23.40"/><use href="#gl56" x="30.20"/></g><g transform="translate(857.70,756.40) skewX(-15) scale(1.4283,1.4) translate(0,-10)" fill="none" stroke="#fff" stroke-width="1.25" stroke-linecap="round" stroke-linejoin="round"><use href="#gl51" x="0.00"/><use href="#gl54" x="6.80"/><use href="#gl52" x="13.60"/><use href="#gl46" x="20.40"/><use href="#gl52" x="23.40"/><use href="#gl57" x="30.20"/></g><g transform="translate(938.60,765.30) skewX(-15) scale(1.3465,1.4) translate(0,-10)" fill="none" stroke="#fff" stroke-width="1.25" stroke-linecap="round" stroke-linejoin="round"><use href="#gl51" x="0.00"/><use href="#gl54" x="6.80"/><use href="#gl52" x="13.60"/><use href="#gl46" x="20.40"/><use href="#gl49" x="23.40"/><use href="#gl52" x="30.20"/></g><g transform="translate(576.80,784.30) skewX(-15) scale(1.3143,1.4) translate(0,-10)" fill="none" stroke="#fff" stroke-width="1.25" stroke-linecap="round" stroke-linejoin="round"><use href="#gl51" x="0.00"/><use href="#gl54" x="6.80"/><use href="#gl52" x="13.60"/><use href="#gl46" x="20.40"/><use href="#gl49" x="23.40"/><use href="#gl52" x="30.20"/></g><g transform="translate(698.00,791.40) skewX(-15) scale(1.4488,1.4) translate(0,-10)" fill="none" stroke="#fff" stroke-width="1.25" stroke-linecap="round" stroke-linejoin="round"><use href="#gl51" x="0.00"/><use href="#gl54" x="6.80"/><use href="#gl52" x="13.60"/><use href="#gl46" x="20.40"/><use href="#gl50" x="23.40"/><use href="#gl51" x="30.20"/></g><g transform="translate(938.00,807.60) skewX(-15) scale(1.4196,1.4) translate(0,-10)" fill="none" stroke="#fff" stroke-width="1.25" stroke-linecap="round" stroke-linejoin="round"><use href="#gl51" x="0.00"/><use href="#gl54" x="6.80"/><use href="#gl51" x="13.60"/><use href="#gl46" x="20.40"/><use href="#gl54" x="23.40"/><use href="#gl53" x="30.20"/></g><g transform="translate(806.00,817.30) skewX(-15) scale(1.4020,1.4) translate(0,-10)" fill="none" stroke="#fff" stroke-width="1.25" stroke-linecap="round" stroke-linejoin="round"><use href="#gl51" x="0.00"/><use href="#gl54" x="6.80"/><use href="#gl51" x="13.60"/><use href="#gl46" x="20.40"/><use href="#gl57" x="23.40"/><use href="#gl51" x="30.20"/></g><g transform="translate(636.80,846.10) skewX(-15) scale(1.3874,1.4) translate(0,-10)" fill="none" stroke="#fff" stroke-width="1.25" stroke-linecap="round" stroke-linejoin="round"><use href="#gl51" x="0.00"/><use href="#gl54" x="6.80"/><use href="#gl52" x="13.60"/><use href="#gl46" x="20.40"/><use href="#gl48" x="23.40"/><use href="#gl52" x="30.20"/></g><g transform="translate(701.50,847.50) skewX(-15) scale(1.3874,1.4) translate(0,-10)" fill="none" stroke="#fff" stroke-width="1.25" stroke-linecap="round" stroke-linejoin="round"><use href="#gl51" x="0.00"/><use href="#gl54" x="6.80"/><use href="#gl51" x="13.60"/><use href="#gl46" x="20.40"/><use href="#gl55" x="23.40"/><use href="#gl53" x="30.20"/></g><g transform="translate(768.80,851.50) skewX(-15) scale(1.4720,1.4) translate(0,-10)" fill="none" stroke="#fff" stroke-width="1.25" stroke-linecap="round" stroke-linejoin="round"><use href="#gl66" x="0.00"/><use href="#gl45" x="6.80"/><use href="#gl56" x="12.80"/><use href="#gl50" x="19.60"/><use href="#gl54" x="26.40"/></g><g transform="translate(843.00,869.00) skewX(-15) scale(1.3465,1.4) translate(0,-10)" fill="none" stroke="#fff" stroke-width="1.25" stroke-linecap="round" stroke-linejoin="round"><use href="#gl51" x="0.00"/><use href="#gl54" x="6.80"/><use href="#gl51" x="13.60"/><use href="#gl46" x="20.40"/><use href="#gl54" x="23.40"/><use href="#gl49" x="30.20"/></g><g transform="translate(790.00,872.00) skewX(-15) scale(1.3991,1.4) translate(0,-10)" fill="none" stroke="#fff" stroke-width="1.25" stroke-linecap="round" stroke-linejoin="round"><use href="#gl51" x="0.00"/><use href="#gl54" x="6.80"/><use href="#gl51" x="13.60"/><use href="#gl46" x="20.40"/><use href="#gl55" x="23.40"/><use href="#gl55" x="30.20"/></g><g transform="translate(508.00,873.60) skewX(-15) scale(1.4371,1.4) translate(0,-10)" fill="none" stroke="#fff" stroke-width="1.25" stroke-linecap="round" stroke-linejoin="round"><use href="#gl51" x="0.00"/><use href="#gl54" x="6.80"/><use href="#gl51" x="13.60"/><use href="#gl46" x="20.40"/><use href="#gl55" x="23.40"/><use href="#gl54" x="30.20"/></g><g transform="translate(698.80,890.60) skewX(-15) scale(1.3465,1.4) translate(0,-10)" fill="none" stroke="#fff" stroke-width="1.25" stroke-linecap="round" stroke-linejoin="round"><use href="#gl51" x="0.00"/><use href="#gl54" x="6.80"/><use href="#gl51" x="13.60"/><use href="#gl46" x="20.40"/><use href="#gl55" x="23.40"/><use href="#gl49" x="30.20"/></g><g transform="translate(526.60,900.70) skewX(-15) scale(1.3903,1.4) translate(0,-10)" fill="none" stroke="#fff" stroke-width="1.25" stroke-linecap="round" stroke-linejoin="round"><use href="#gl51" x="0.00"/><use href="#gl54" x="6.80"/><use href="#gl51" x="13.60"/><use href="#gl46" x="20.40"/><use href="#gl56" x="23.40"/><use href="#gl56" x="30.20"/></g><g transform="translate(647.60,913.50) skewX(-15) scale(1.4254,1.4) translate(0,-10)" fill="none" stroke="#fff" stroke-width="1.25" stroke-linecap="round" stroke-linejoin="round"><use href="#gl51" x="0.00"/><use href="#gl54" x="6.80"/><use href="#gl51" x="13.60"/><use href="#gl46" x="20.40"/><use href="#gl57" x="23.40"/><use href="#gl55" x="30.20"/></g><g transform="translate(891.40,914.90) skewX(-15) scale(1.3494,1.4) translate(0,-10)" fill="none" stroke="#fff" stroke-width="1.25" stroke-linecap="round" stroke-linejoin="round"><use href="#gl51" x="0.00"/><use href="#gl54" x="6.80"/><use href="#gl51" x="13.60"/><use href="#gl46" x="20.40"/><use href="#gl52" x="23.40"/><use href="#gl49" x="30.20"/></g><g transform="translate(783.00,930.00) skewX(-15) scale(1.4108,1.4) translate(0,-10)" fill="none" stroke="#fff" stroke-width="1.25" stroke-linecap="round" stroke-linejoin="round"><use href="#gl51" x="0.00"/><use href="#gl54" x="6.80"/><use href="#gl51" x="13.60"/><use href="#gl46" x="20.40"/><use href="#gl53" x="23.40"/><use href="#gl48" x="30.20"/></g>
<g transform="translate(671.00,380.00) skewX(-15) scale(1.3938,1.4) translate(0,-10)" fill="none" stroke="#ff1a1a" stroke-width="1.25" stroke-linecap="round" stroke-linejoin="round"><use href="#gl43" x="0.00"/><use href="#gl56" x="6.50"/><use href="#gl49" x="13.30"/><use href="#gl46" x="20.10"/><use href="#gl55" x="23.10"/><use href="#gl56" x="29.90"/></g>
<g transform="translate(511.80,848.20) skewX(-15) scale(1.4616,1.4) translate(0,-10)" fill="none" stroke="#ff1a1a" stroke-width="1.25" stroke-linecap="round" stroke-linejoin="round"><use href="#gl43" x="0.00"/><use href="#gl51" x="6.50"/><use href="#gl54" x="13.30"/><use href="#gl46" x="20.10"/><use href="#gl50" x="23.10"/><use href="#gl50" x="29.90"/></g>
<g transform="translate(865.50,332.30) rotate(-67) translate(-20.00,6.50) skewX(-15) scale(1.4966,1.3) translate(0,-10)" fill="none" stroke="#ff1a1a" stroke-width="1.25" stroke-linecap="round" stroke-linejoin="round"><use href="#gl1055" x="0.00"/><use href="#gl1050" x="6.80"/><use href="#gl49" x="13.60"/><use href="#gl53" x="20.40"/></g>
<g transform="translate(786.00,663.00) rotate(-67) translate(-20.00,6.50) skewX(-15) scale(1.4966,1.3) translate(0,-10)" fill="none" stroke="#ff1a1a" stroke-width="1.25" stroke-linecap="round" stroke-linejoin="round"><use href="#gl1055" x="0.00"/><use href="#gl1050" x="6.80"/><use href="#gl49" x="13.60"/><use href="#gl52" x="20.40"/></g>
<g transform="translate(983.00,233.00) rotate(200) translate(-15.00,6.50) skewX(-15) scale(1.5066,1.3) translate(0,-10)" fill="none" stroke="#cf7a1f" stroke-width="1.25" stroke-linecap="round" stroke-linejoin="round"><use href="#gl51" x="0.00"/><use href="#gl54" x="6.80"/><use href="#gl52" x="13.60"/></g>
<g transform="translate(890.00,797.00) rotate(-17) translate(-14.00,6.50) skewX(-15) scale(1.3930,1.3) translate(0,-10)" fill="none" stroke="#cf7a1f" stroke-width="1.25" stroke-linecap="round" stroke-linejoin="round"><use href="#gl51" x="0.00"/><use href="#gl54" x="6.80"/><use href="#gl52" x="13.60"/></g>
<g transform="translate(898.00,349.00) rotate(200) translate(-4.50,5.00) skewX(-15) scale(1.5801,1.0) translate(0,-10)" fill="none" stroke="#fff" stroke-width="1.25" stroke-linecap="round" stroke-linejoin="round"><use href="#gl54" x="0.00"/></g>
<polyline points="847.5,248.7 877.7,248.7" fill="none" stroke="#fff" stroke-width="1.3" stroke-linejoin="round"/>
<polyline points="968,593.25 1000,593.25" fill="none" stroke="#fff" stroke-width="1.3" stroke-linejoin="round"/>
<path d="M823,239.5 Q828,233.0 833,239.5 M821,253.5 Q828,243.0 835,253.5 M828,235.5 V259.7 H832.5" fill="none" stroke="#fff" stroke-width="1.25"/>
<path d="M945,584 Q950,577.5 955,584 M943,598 Q950,587.5 957,598 M950,580 V604.2 H954.5" fill="none" stroke="#fff" stroke-width="1.25"/>
<polyline points="576,183.75 684,183.75" fill="none" stroke="#fff" stroke-width="1.2" stroke-linejoin="round"/>
<polyline points="682.5,167 682.5,185" fill="none" stroke="#fff" stroke-width="1.2" stroke-linejoin="round"/>
<g fill="none" stroke="#e8e8e8" stroke-width="1.6"><rect x="437.5" y="860.5" width="21" height="21"/><path d="M448,860 V790.6 M440.2,790.6 L448,763.5 L455.7,790.6 Z"/><path d="M459,871 H528 M528,863.7 L552.4,871 L528,878.5 Z"/><path d="M442,736.5 L448,743 L454.4,736.5 M448,743 V749"/><path d="M570.4,865 L582.5,877.4 M582.5,865 L570.4,877.4"/></g>
<path d="M504.2,746.2 H545.2 M524.9,725.4 V766.7" stroke="#00dd00" stroke-width="1.6"/>
<g fill="none" stroke="#595959" stroke-width="1"><circle cx="1823.5" cy="261.4" r="77"/><circle cx="1823.5" cy="261.4" r="51"/><path d="M1746.5,261.4 H1900.5 M1823.5,184.4 V338.4"/></g>
<circle cx="1823.5" cy="261.4" r="5.8" fill="#7a5a3e"/>
<rect x="1795.4" y="338.4" width="54" height="15.4" rx="7.7" fill="#2a2a2a"/>
<text x="1822.4" y="350.5" text-anchor="middle" fill="#a8a8a8" font-family="Liberation Sans" font-size="11.5">Сверху</text>
</svg>
<div class="r" style="left:1917px;top:167px;width:1px;height:751px;background:#7a7a7a"></div>
<div class="r" style="left:401px;top:920px;width:1517px;height:19px;background:#4d4d4d;"></div>
<div class="r" style="left:437px;top:920px;width:58px;height:17px;background:#7a7a7a;"></div>
<div class="t" style="left:426.00px;width:80px;text-align:center;top:922.34px;font-size:12px;color:#f0f0f0;">Модель</div>
<div class="r" style="left:495px;top:920px;width:44px;height:17px;background:#4f4f4f;border:1px solid #5e5e5e;box-sizing:border-box;"></div>
<div class="t" style="left:487.00px;width:60px;text-align:center;top:922.34px;font-size:12px;color:#b8b8b8;">Лист2</div>
<div class="r" style="left:0px;top:942px;width:1918px;height:5px;background:#4e4e4e;"></div>
<div class="r" style="left:0px;top:947px;width:1918px;height:69px;background:#5d5d5d;"></div>
<div class="r" style="left:0px;top:947px;width:18px;height:68px;background:#7a7a7a;"></div>
<div class="r" style="left:18px;top:947px;width:2px;height:53px;background:#555555;"></div>
<div class="r" style="left:18px;top:998px;width:1900px;height:2px;background:#525252;"></div>
<div class="r" style="left:18px;top:1000px;width:1900px;height:1px;background:#6c6c6c;"></div>
<div class="r" style="left:0px;top:1016px;width:1918px;height:23px;background:#4a4a4a;"></div>
<svg style="left:362px;top:150px" width="10" height="12" viewBox="0 0 10 12"><path d="M2 1 H8 M3 1 V6 M7 1 V6 M1 7 H9 M5 7 V12" stroke="#eee" stroke-width="1.4" fill="none"/></svg>
<svg style="left:379px;top:151px" width="10" height="10" viewBox="0 0 10 10"><path d="M1 1 L9 9 M9 1 L1 9" stroke="#f4f4f4" stroke-width="1.6"/></svg>
<div class="r" style="left:2px;top:167px;width:22px;height:22px;background:#4b5c72;border:1px solid #6990c4;box-sizing:border-box;"></div>
<svg style="left:2px;top:167px" width="22" height="22" viewBox="0 0 22 22"><path d="M6 4 V12 M2 8 H10" stroke="#5aa0ea" stroke-width="1.3"/><path transform="translate(12,10) scale(0.9)" d="M0 0 L0 10 L2.6 7.6 L4.6 11.5 L6.2 10.7 L4.3 6.9 L7.6 6.7Z" fill="#f0f0f0"/></svg>
<svg style="left:30px;top:172px" width="12" height="14" viewBox="0 0 12 14"><path transform="translate(1,1) scale(1.05)" d="M0 0 L0 10 L2.6 7.6 L4.6 11.5 L6.2 10.7 L4.3 6.9 L7.6 6.7Z" fill="#f0f0f0"/></svg>
<div class="r" style="left:49px;top:172px;width:1px;height:14px;background:#3a3a3a;"></div>
<svg style="left:56px;top:169px" width="18" height="18" viewBox="0 0 18 18"><rect x="1" y="1" width="14" height="13" fill="none" stroke="#ddd" stroke-width="1.2" stroke-dasharray="2,1.5"/><path transform="translate(10,7) scale(0.85)" d="M0 0 L0 10 L2.6 7.6 L4.6 11.5 L6.2 10.7 L4.3 6.9 L7.6 6.7Z" fill="#f0f0f0"/></svg>
<svg style="left:78px;top:169px" width="18" height="18" viewBox="0 0 18 18"><rect x="1" y="1" width="14" height="13" fill="none" stroke="#ccc" stroke-width="1.2" stroke-dasharray="2,1.5"/><rect x="4" y="4" width="8" height="7" fill="#999"/><path transform="translate(10,7) scale(0.85)" d="M0 0 L0 10 L2.6 7.6 L4.6 11.5 L6.2 10.7 L4.3 6.9 L7.6 6.7Z" fill="#f0f0f0"/></svg>
<svg style="left:100px;top:169px" width="18" height="18" viewBox="0 0 18 18"><path d="M1 8 L7 1 V15Z" fill="#5aaef0"/><path d="M9 1 H16 L9 8Z" fill="#5aaef0"/><path transform="translate(10,7) scale(0.85)" d="M0 0 L0 10 L2.6 7.6 L4.6 11.5 L6.2 10.7 L4.3 6.9 L7.6 6.7Z" fill="#f0f0f0"/></svg>
<svg style="left:122px;top:169px" width="18" height="18" viewBox="0 0 18 18"><path d="M1 2 H13 L8.5 7 V13 L5.5 10 V7Z" fill="#5aaef0"/><path d="M12 7 L9 12 H12 L10 16 L15 10 H12 L14 7Z" fill="#f0a040"/></svg>
<div class="r" style="left:145px;top:172px;width:1px;height:14px;background:#3a3a3a;"></div>
<svg style="left:152px;top:169px" width="18" height="18" viewBox="0 0 18 18"><rect x="1" y="4" width="10" height="9" fill="none" stroke="#8a9ab0" stroke-width="1" stroke-dasharray="1.5,1.5"/><path d="M6 1 V9 M3.5 3.5 L6 1 L8.5 3.5" fill="none" stroke="#7a9ac0" stroke-width="1.2"/><path transform="translate(9,7) scale(0.85)" d="M0 0 L0 10 L2.6 7.6 L4.6 11.5 L6.2 10.7 L4.3 6.9 L7.6 6.7Z" fill="#aaa"/></svg>
<svg style="left:175px;top:169px" width="18" height="18" viewBox="0 0 18 18"><path d="M1 6 L5 10 L12 1" fill="none" stroke="#4a78b0" stroke-width="2.2"/><path transform="translate(9,7) scale(0.85)" d="M0 0 L0 10 L2.6 7.6 L4.6 11.5 L6.2 10.7 L4.3 6.9 L7.6 6.7Z" fill="#aaa"/></svg>
<div class="r" style="left:198px;top:172px;width:1px;height:14px;background:#3a3a3a;"></div>
<div class="r" style="left:205px;top:170px;width:16px;height:16px;background:#6aacf0;"></div>
<svg style="left:205px;top:170px" width="16" height="16" viewBox="0 0 16 16"><path transform="translate(4,2) scale(1.1)" d="M0 0 L0 10 L2.6 7.6 L4.6 11.5 L6.2 10.7 L4.3 6.9 L7.6 6.7Z" fill="#fff" stroke="#333" stroke-width="0.6"/></svg>
<svg style="left:226px;top:169px" width="18" height="18" viewBox="0 0 18 18"><path d="M1 1 L8 8 M8 1 L1 8" stroke="#f0a050" stroke-width="1.2"/><path transform="translate(9,7) scale(0.85)" d="M0 0 L0 10 L2.6 7.6 L4.6 11.5 L6.2 10.7 L4.3 6.9 L7.6 6.7Z" fill="#f0f0f0"/></svg>
<svg style="left:250px;top:171px" width="14" height="14" viewBox="0 0 14 14"><circle cx="7" cy="7" r="6.6" fill="#a8a8a8"/><text x="7" y="11" text-anchor="middle" font-family="Liberation Sans" font-weight="bold" font-size="10" fill="#333">?</text></svg>
<svg style="left:403px;top:921px" width="16" height="15" viewBox="0 0 16 15"><rect x="0.5" y="0.5" width="15" height="10" fill="#333" stroke="#eee"/><rect x="0.5" y="10.5" width="15" height="4" fill="#333" stroke="#eee"/><rect x="1" y="3.5" width="14" height="3" fill="#6aa0e8"/><g fill="#eee"><circle cx="2.5" cy="2" r="0.8"/><circle cx="2.5" cy="8" r="0.8"/><circle cx="2.5" cy="12.5" r="0.8"/></g></svg>
<svg style="left:3px;top:949px" width="12" height="12" viewBox="0 0 12 12"><path d="M1.5 1.5 L10.5 10.5 M10.5 1.5 L1.5 10.5" stroke="#f0f0f0" stroke-width="1.3"/></svg>
<svg style="left:4px;top:970px" width="10" height="12" viewBox="0 0 10 12"><path d="M2 1 H8 M3 1 V6 M7 1 V6 M1 7 H9 M5 7 V12" stroke="#eee" stroke-width="1.3" fill="none"/></svg>
<div class="r" style="left:0px;top:984px;width:18px;height:31px;overflow:hidden;"><div class="t" style="left:2px;top:31px;font-size:12px;color:#c4c4c4;transform:rotate(-90deg);transform-origin:0 0;">Командная строка</div></div>
<div class="r" style="left:18px;top:948px;width:1900px;height:51px;overflow:hidden;z-index:0;"><div class="t" style="left:3px;top:-4.34px;font-size:11.63px;color:#ececec;font-family:'Liberation Mono',monospace;">Ribbon - Лента</div><div class="t" style="left:3px;top:9.41px;font-size:11.63px;color:#ececec;font-family:'Liberation Mono',monospace;">SurveyTools_AttributeModify - Редактирование атрибутов</div><div class="t" style="left:3px;top:23.16px;font-size:11.63px;color:#ececec;font-family:'Liberation Mono',monospace;">Выберите блок или [?]:</div><div class="t" style="left:3px;top:36.91px;font-size:11.63px;color:#ececec;font-family:'Liberation Mono',monospace;">1 найдено</div></div>
<div class="t" style="left:20px;top:1002.16px;font-size:11.63px;color:#ececec;font-family:'Liberation Mono',monospace;">Команда:</div>
<div class="t" style="left:4px;top:1022.34px;font-size:12px;color:#e0e0e0;">...</div>
<div class="r" style="left:15px;top:1019px;width:1px;height:17px;background:#3a3a3a;"></div>
<div class="r" style="left:162px;top:1019px;width:1px;height:17px;background:#3a3a3a;"></div>
<div class="r" style="left:203px;top:1019px;width:1px;height:17px;background:#3a3a3a;"></div>
<div class="r" style="left:253px;top:1019px;width:1px;height:17px;background:#3a3a3a;"></div>
<div class="r" style="left:515px;top:1019px;width:1px;height:17px;background:#3a3a3a;"></div>
<div class="r" style="left:595px;top:1019px;width:1px;height:17px;background:#3a3a3a;"></div>
<div class="r" style="left:643px;top:1019px;width:1px;height:17px;background:#3a3a3a;"></div>
<div class="r" style="left:718px;top:1019px;width:1px;height:17px;background:#3a3a3a;"></div>
<div class="r" style="left:759px;top:1019px;width:1px;height:17px;background:#3a3a3a;"></div>
<div class="r" style="left:886px;top:1019px;width:1px;height:17px;background:#3a3a3a;"></div>
<div class="t" style="left:18px;top:1022.34px;font-size:12px;color:#ececec;transform:scaleX(0.8992);transform-origin:0 0;">2354047.60,936325.19,0.00</div>
<div class="t" style="left:172.5px;top:1022.34px;font-size:12px;color:#ececec;transform:scaleX(0.9313);transform-origin:0 0;">ШАГ</div>
<div class="t" style="left:213.75px;top:1022.34px;font-size:12px;color:#ececec;transform:scaleX(0.8335);transform-origin:0 0;">СЕТКА</div>
<div class="t" style="left:263.75px;top:1022.34px;font-size:12px;color:#ececec;transform:scaleX(0.8695);transform-origin:0 0;">оПРИВЯЗКА</div>
<div class="r" style="left:333px;top:1018px;width:97px;height:20px;background:#4b5c72;border:1px solid #6990c4;box-sizing:border-box;"></div>
<div class="t" style="left:342.5px;top:1022.34px;font-size:12px;color:#f4f4f4;transform:scaleX(0.8781);transform-origin:0 0;">3D оПРИВЯЗКА</div>
<div class="t" style="left:438.75px;top:1022.34px;font-size:12px;color:#ececec;transform:scaleX(0.8498);transform-origin:0 0;">ОТС-ОБЪЕКТ</div>
<div class="t" style="left:523.75px;top:1022.34px;font-size:12px;color:#ececec;transform:scaleX(0.8892);transform-origin:0 0;">ОТС-ПОЛЯР</div>
<div class="t" style="left:605px;top:1022.34px;font-size:12px;color:#ececec;transform:scaleX(0.9112);transform-origin:0 0;">ОРТО</div>
<div class="t" style="left:652.5px;top:1022.34px;font-size:12px;color:#ececec;transform:scaleX(0.9241);transform-origin:0 0;">ДИН-ВВОД</div>
<div class="t" style="left:727.5px;top:1022.34px;font-size:12px;color:#ececec;transform:scaleX(0.9173);transform-origin:0 0;">ИЗО</div>
<div class="r" style="left:764px;top:1018px;width:37px;height:20px;background:#4b5c72;border:1px solid #6990c4;box-sizing:border-box;"></div>
<div class="r" style="left:800px;top:1018px;width:83px;height:20px;background:#4b5c72;border:1px solid #6990c4;box-sizing:border-box;"></div>
<div class="t" style="left:772.5px;top:1022.34px;font-size:12px;color:#f4f4f4;transform:scaleX(0.7903);transform-origin:0 0;">ВЕС</div>
<div class="t" style="left:810px;top:1022.34px;font-size:12px;color:#f4f4f4;transform:scaleX(0.8612);transform-origin:0 0;">ШТРИХОВКА</div>
<div class="t" style="left:1270.4px;top:1021.84px;font-size:12px;color:#ececec;transform:scaleX(0.8951);transform-origin:0 0;">МОДЕЛЬ</div>
<svg style="left:1320px;top:1019px" width="16" height="16" viewBox="0 0 16 16"><rect x="1" y="8" width="8" height="6" fill="none" stroke="#ccc" stroke-width="1.1"/><path d="M3 8 V5 A2 2 0 0 1 7 5" fill="none" stroke="#ccc" stroke-width="1.1"/><rect x="8" y="3" width="7" height="5" fill="#9a9a9a" stroke="#ddd" stroke-width="0.8"/></svg>
<div class="r" style="left:1339px;top:1019px;width:1px;height:17px;background:#3a3a3a;"></div>
<svg style="left:1342px;top:1019px" width="15" height="16" viewBox="0 0 15 16"><rect x="0.5" y="1.5" width="12" height="10" fill="#ddd" stroke="#eee"/><path d="M8 11 H15 L11.5 15Z" fill="#222" stroke="#ddd" stroke-width="0.8"/></svg>
<svg style="left:1441px;top:1025px" width="8" height="6" viewBox="0 0 8 6"><path d="M0 0 H8 L4 5Z" fill="#3f3f3f"/></svg>
<svg style="left:1454px;top:1019px" width="17" height="17" viewBox="0 0 17 17"><circle cx="5" cy="5" r="3.5" fill="#f4e08a"/><rect x="3.5" y="8" width="3" height="3" fill="#ccc"/><path d="M1 12 V15 H6 M10 3 H15 V8" fill="none" stroke="#bbb" stroke-width="1"/><path transform="translate(8,6) scale(0.9)" d="M0 0 L0 10 L2.6 7.6 L4.6 11.5 L6.2 10.7 L4.3 6.9 L7.6 6.7Z" fill="#fff" stroke="#222" stroke-width="0.5"/></svg>
<svg style="left:1479px;top:1019px" width="12" height="17" viewBox="0 0 12 17"><ellipse cx="6" cy="6" rx="5" ry="5.5" fill="#d8d8d8"/><rect x="3.5" y="11" width="5" height="4" fill="#aaa"/></svg>
<div class="r" style="left:1496px;top:1018px;width:87px;height:20px;background:#4b5c72;border:1px solid #6990c4;box-sizing:border-box;"></div>
<div class="r" style="left:1525px;top:1018px;width:1px;height:20px;background:#6990c4;"></div>
<div class="r" style="left:1554px;top:1018px;width:1px;height:20px;background:#6990c4;"></div>
<svg style="left:1503px;top:1020px" width="17" height="17" viewBox="0 0 17 17"><circle cx="8.5" cy="8.5" r="6.5" fill="none" stroke="#e02020" stroke-width="1.6"/><path d="M4 4 L13 13" stroke="#e02020" stroke-width="1.4"/><path transform="translate(6,4) scale(0.8)" d="M0 0 L0 10 L2.6 7.6 L4.6 11.5 L6.2 10.7 L4.3 6.9 L7.6 6.7Z" fill="#fff" stroke="#222" stroke-width="0.5"/></svg>
<svg style="left:1533px;top:1020px" width="17" height="17" viewBox="0 0 17 17"><path transform="translate(1,1) scale(1)" d="M0 0 L0 10 L2.6 7.6 L4.6 11.5 L6.2 10.7 L4.3 6.9 L7.6 6.7Z" fill="#fff" stroke="#222" stroke-width="0.5"/><rect x="8" y="8" width="8" height="7" fill="#ddd" stroke="#333" stroke-width="0.6"/><path d="M9.5 10.5 H14.5 M9.5 12.5 H14.5" stroke="#333" stroke-width="0.8"/></svg>
<svg style="left:1563px;top:1020px" width="18" height="17" viewBox="0 0 18 17"><path d="M3 2 V15 H17 M3 15 L10 8" fill="none" stroke="#ddd" stroke-width="1.1"/><path d="M11 1 L8 7 H11 L9 12 L14 5 H11 L13 1Z" fill="#eee"/></svg>
<div class="t" style="left:1616.3px;top:1021.84px;font-size:12px;color:#ececec;transform:scaleX(0.8885);transform-origin:0 0;">m1:2</div>
<div class="r" style="left:1672px;top:1019px;width:1px;height:17px;background:#3a3a3a;"></div>
<div class="r" style="left:1701px;top:1019px;width:1px;height:17px;background:#3a3a3a;"></div>
<div class="r" style="left:1731px;top:1019px;width:1px;height:17px;background:#3a3a3a;"></div>
<div class="r" style="left:1760px;top:1019px;width:1px;height:17px;background:#3a3a3a;"></div>
<div class="r" style="left:1790px;top:1019px;width:1px;height:17px;background:#3a3a3a;"></div>
<div class="r" style="left:1818px;top:1019px;width:1px;height:17px;background:#3a3a3a;"></div>
<svg style="left:1681px;top:1019px" width="16" height="17" viewBox="0 0 16 17"><path d="M4 16 L1 9 Q1 7.5 2.5 8.5 L4 10 V3 Q5 1.5 6 3 V8 V1.5 Q7 0 8 1.5 V8 V2.5 Q9 1 10 2.5 V8 V4 Q11 2.5 12 4 V11 Q12 14 10 16Z" fill="#f0f0f0" stroke="#555" stroke-width="0.6"/></svg>
<svg style="left:1712px;top:1019px" width="17" height="17" viewBox="0 0 17 17"><circle cx="7" cy="7" r="5.2" fill="#bfe0ff" stroke="#eee" stroke-width="1.5"/><path d="M11 11 L16 16" stroke="#ddd" stroke-width="2.4"/></svg>
<div class="r" style="left:1740px;top:1019px;width:17px;height:17px;background:#3b83d8;"></div>
<svg style="left:1740px;top:1019px" width="17" height="17" viewBox="0 0 17 17"><circle cx="7.5" cy="7.5" r="4.8" fill="#cfe6ff" stroke="#fff" stroke-width="1.3"/><path d="M11 11 L15.5 15.5" stroke="#fff" stroke-width="2.2"/></svg>
<svg style="left:1768px;top:1019px" width="17" height="17" viewBox="0 0 17 17"><rect x="1" y="1" width="13" height="12" fill="none" stroke="#8ab4e8" stroke-width="1" stroke-dasharray="2,1"/><circle cx="10" cy="10" r="3.8" fill="none" stroke="#eee" stroke-width="1.2"/><path d="M12.5 12.5 L16 16" stroke="#eee" stroke-width="1.8"/></svg>
<svg style="left:1798px;top:1019px" width="17" height="17" viewBox="0 0 17 17"><ellipse cx="8.5" cy="9" rx="7.5" ry="3.5" fill="none" stroke="#ccc" stroke-width="1"/><path d="M8.5 1 V16" stroke="#ccc" stroke-width="1"/><path d="M1 9 L3 7 L3 11Z" fill="#ddd"/></svg>
<svg style="left:1827px;top:1019px" width="16" height="17" viewBox="0 0 16 17"><path d="M3 8 A5.5 5.5 0 0 1 13 5" fill="none" stroke="#3cc83c" stroke-width="2.2"/><path d="M13 9 A5.5 5.5 0 0 1 3 12" fill="none" stroke="#3cc83c" stroke-width="2.2"/><path d="M11 2 L15 6 H10Z M5 15 L1 11 H6Z" fill="#3cc83c"/></svg>
<svg style="left:1848px;top:1019px" width="17" height="17" viewBox="0 0 17 17"><rect x="4" y="1" width="12" height="9" fill="none" stroke="#ddd" stroke-width="1"/><rect x="1" y="5" width="10" height="8" fill="#777" stroke="#ddd" stroke-width="1"/><rect x="10" y="10" width="6" height="6" fill="#eee"/></svg>
<svg style="left:1870px;top:1019px" width="19" height="17" viewBox="0 0 19 17"><path d="M2 16 Q3 6 14 3" fill="none" stroke="#4a90e8" stroke-width="2"/><circle cx="2.5" cy="15" r="1.8" fill="#4a90e8"/><circle cx="15.5" cy="3" r="1.8" fill="#4a90e8"/></svg>
<svg style="left:1900px;top:1019px" width="17" height="17" viewBox="0 0 17 17"><rect x="1" y="1" width="15" height="15" fill="none" stroke="#5aaef0" stroke-width="1.2"/><rect x="3.5" y="4" width="10" height="8" fill="#5aaef0"/></svg>
<div class="r" style="left:1143px;top:226px;width:528px;height:581px;background:#3a3a3a;"></div>
<div class="r" style="left:1144px;top:227px;width:526px;height:579px;background:#d4d4d4;"></div>
<div class="r" style="left:1144px;top:227px;width:526px;height:32px;background:#ffffff;"></div>
<svg style="left:1154px;top:234px" width="15" height="16" viewBox="0 0 15 16"><defs><linearGradient id="lg1" x1="0" y1="0" x2="0" y2="1"><stop offset="0" stop-color="#43d8f5"/><stop offset="1" stop-color="#3a9ad8"/></linearGradient></defs><path d="M4 1 H14 V9 Q14 15 8 15 H1 V5 Q1 1 4 1Z" fill="url(#lg1)" stroke="#1c4f66" stroke-width="0.8"/><path d="M7.5 1 V15" stroke="#1c4f66" stroke-width="0.8"/><ellipse cx="7" cy="8" rx="1.4" ry="2" fill="#1c3f50"/></svg>
<div class="t" style="left:1175px;top:236.84px;font-size:12px;color:#000000;">Изменение свойств атрибутов блока</div>
<svg style="left:1648px;top:235px" width="14" height="14" viewBox="0 0 14 14"><path d="M2 2 L12 12 M12 2 L2 12" stroke="#111" stroke-width="1.1"/></svg>
<div class="t" style="left:1150px;top:267.84px;font-size:12px;color:#000000;letter-spacing:-0.15px;">Выберите изменяемый атрибут для блока ГППИИ05330 со слоя ИИ_ОТМЕТКИ</div>
<div class="r" style="left:1149px;top:299px;width:246px;height:97px;border:2px solid #ececec;border-radius:4px;box-sizing:border-box;"></div>
<div class="r" style="left:1155px;top:297px;width:141.234375px;height:6px;background:#d4d4d4;"></div>
<div class="t" style="left:1157px;top:292.84px;font-size:12px;color:#000000;">Список атрибутов блока</div>
<div class="r" style="left:1159px;top:311px;width:226px;height:75px;background:#ffffff;border:1px solid #9c9c9c;box-sizing:border-box;"></div>
<div class="r" style="left:1161px;top:313px;width:222px;height:20px;background:#cbe4f5;border:1px solid #2a9be0;box-sizing:border-box;"></div>
<div class="t" style="left:1166px;top:317.84px;font-size:12px;color:#000000;">HEIGHT</div>
<div class="t" style="left:1166px;top:337.84px;font-size:12px;color:#000000;">NUMBER</div>
<div class="r" style="left:1402px;top:299px;width:262px;height:97px;border:2px solid #ececec;border-radius:4px;box-sizing:border-box;"></div>
<div class="r" style="left:1408px;top:297px;width:68.0px;height:6px;background:#d4d4d4;"></div>
<div class="t" style="left:1410px;top:292.84px;font-size:12px;color:#000000;">Применить</div>
<svg style="left:1416px;top:316.5px" width="14" height="14" viewBox="0 0 14 14"><circle cx="7" cy="7" r="5.6" fill="#fff" stroke="#333" stroke-width="1"/><circle cx="7" cy="7" r="3" fill="#111"/></svg>
<div class="t" style="left:1435px;top:317.84px;font-size:12px;color:#000000;">Для всех слоев</div>
<svg style="left:1416px;top:341.3px" width="14" height="14" viewBox="0 0 14 14"><circle cx="7" cy="7" r="5.6" fill="#fff" stroke="#333" stroke-width="1"/></svg>
<div class="t" style="left:1435px;top:342.64px;font-size:12px;color:#000000;">Для слоя выбранного блока</div>
<svg style="left:1416px;top:366.1px" width="14" height="14" viewBox="0 0 14 14"><circle cx="7" cy="7" r="5.6" fill="#fff" stroke="#333" stroke-width="1"/></svg>
<div class="t" style="left:1435px;top:367.44px;font-size:12px;color:#000000;">Выбор вручную</div>
<div class="r" style="left:1149px;top:411px;width:246px;height:79px;border:2px solid #ececec;border-radius:4px;box-sizing:border-box;"></div>
<div class="r" style="left:1155px;top:409px;width:112.453125px;height:6px;background:#d4d4d4;"></div>
<div class="t" style="left:1157px;top:404.84px;font-size:12px;color:#000000;">Значение атрибута</div>
<div class="r" style="left:1165px;top:429px;width:13px;height:13px;background:#ffffff;border:1px solid #333;box-sizing:border-box;"></div>
<div class="t" style="left:1184px;top:429.84px;font-size:12px;color:#000000;">Изменить</div>
<div class="t" style="left:1167px;top:458.34px;font-size:12px;color:#000000;">Новое значение</div>
<div class="r" style="left:1262px;top:452px;width:120px;height:25px;background:#e9e9e9;border:1px solid #b4b4b4;box-sizing:border-box;"></div>
<div class="r" style="left:1402px;top:411px;width:262px;height:79px;border:2px solid #ececec;border-radius:4px;box-sizing:border-box;"></div>
<div class="r" style="left:1408px;top:409px;width:78.90625px;height:6px;background:#d4d4d4;"></div>
<div class="t" style="left:1410px;top:404.84px;font-size:12px;color:#000000;">Стиль текста</div>
<div class="r" style="left:1417px;top:429px;width:13px;height:13px;background:#ffffff;border:1px solid #333;box-sizing:border-box;"></div>
<div class="t" style="left:1436px;top:429.84px;font-size:12px;color:#000000;">Изменить</div>
<div class="t" style="left:1419px;top:458.34px;font-size:12px;color:#000000;">Новый стиль текста</div>
<div class="r" style="left:1532px;top:452px;width:120px;height:25px;background:#e9e9e9;border:1px solid #b4b4b4;box-sizing:border-box;"></div>
<div class="t" style="left:1535px;top:454.84px;font-size:12px;color:#6d6d6d;letter-spacing:-0.3px;">ГОСТ 2.304 КУРСИВ</div>
<div class="r" style="left:1149px;top:505px;width:246px;height:69px;border:2px solid #ececec;border-radius:4px;box-sizing:border-box;"></div>
<div class="r" style="left:1155px;top:503px;width:32.890625px;height:6px;background:#d4d4d4;"></div>
<div class="t" style="left:1157px;top:498.84px;font-size:12px;color:#000000;">Цвет</div>
<div class="r" style="left:1165px;top:523px;width:13px;height:13px;background:#ffffff;border:1px solid #333;box-sizing:border-box;"></div>
<div class="t" style="left:1184px;top:523.84px;font-size:12px;color:#000000;">Изменить</div>
<div class="r" style="left:1160px;top:543px;width:82px;height:20px;background:#eeeeee;"></div>
<svg style="left:1228px;top:550px" width="8" height="6" viewBox="0 0 8 6"><path d="M0.5 1 L4 4.5 L7.5 1" stroke="#9a9a9a" fill="none" stroke-width="1"/></svg>
<div class="r" style="left:1402px;top:505px;width:262px;height:69px;border:2px solid #ececec;border-radius:4px;box-sizing:border-box;"></div>
<div class="r" style="left:1408px;top:503px;width:63.734375px;height:6px;background:#d4d4d4;"></div>
<div class="t" style="left:1410px;top:498.84px;font-size:12px;color:#000000;">Вес линий</div>
<div class="r" style="left:1417px;top:523px;width:13px;height:13px;background:#ffffff;border:1px solid #333;box-sizing:border-box;"></div>
<div class="t" style="left:1436px;top:523.84px;font-size:12px;color:#000000;">Изменить</div>
<div class="r" style="left:1412px;top:543px;width:82px;height:20px;background:#eeeeee;"></div>
<svg style="left:1480px;top:550px" width="8" height="6" viewBox="0 0 8 6"><path d="M0.5 1 L4 4.5 L7.5 1" stroke="#9a9a9a" fill="none" stroke-width="1"/></svg>
<div class="r" style="left:1149px;top:589px;width:246px;height:79px;border:2px solid #ececec;border-radius:4px;box-sizing:border-box;"></div>
<div class="r" style="left:1155px;top:587px;width:100.453125px;height:6px;background:#d4d4d4;"></div>
<div class="t" style="left:1157px;top:582.84px;font-size:12px;color:#000000;">Высота атрибута</div>
<div class="r" style="left:1165px;top:607px;width:13px;height:13px;background:#ffffff;border:1px solid #333;box-sizing:border-box;"></div>
<div class="t" style="left:1184px;top:607.84px;font-size:12px;color:#000000;">Изменить</div>
<div class="t" style="left:1167px;top:637.34px;font-size:12px;color:#000000;">Новая высота</div>
<div class="r" style="left:1249px;top:629px;width:47px;height:25px;background:#e9e9e9;border:1px solid #b4b4b4;box-sizing:border-box;"></div>
<div class="t" style="left:1252px;top:632.34px;font-size:12px;color:#6d6d6d;">2.00</div>
<div class="r" style="left:1402px;top:589px;width:262px;height:79px;border:2px solid #ececec;border-radius:4px;box-sizing:border-box;"></div>
<div class="r" style="left:1408px;top:587px;width:95.359375px;height:6px;background:#d4d4d4;"></div>
<div class="t" style="left:1410px;top:582.84px;font-size:12px;color:#000000;">Степень сжатия</div>
<div class="r" style="left:1417px;top:607px;width:13px;height:13px;background:#ffffff;border:1px solid #333;box-sizing:border-box;"></div>
<div class="t" style="left:1436px;top:607.84px;font-size:12px;color:#000000;">Изменить</div>
<div class="t" style="left:1419px;top:637.34px;font-size:12px;color:#000000;">Новая степень сжатия</div>
<div class="r" style="left:1547px;top:629px;width:47px;height:25px;background:#e9e9e9;border:1px solid #b4b4b4;box-sizing:border-box;"></div>
<div class="t" style="left:1550px;top:632.34px;font-size:12px;color:#6d6d6d;">0.80</div>
<div class="r" style="left:1149px;top:683px;width:246px;height:79px;border:2px solid #ececec;border-radius:4px;box-sizing:border-box;"></div>
<div class="r" style="left:1155px;top:681px;width:85.125px;height:6px;background:#d4d4d4;"></div>
<div class="t" style="left:1157px;top:676.84px;font-size:12px;color:#000000;">Угол поворота</div>
<div class="r" style="left:1165px;top:701px;width:13px;height:13px;background:#ffffff;border:1px solid #333;box-sizing:border-box;"></div>
<div class="t" style="left:1184px;top:701.84px;font-size:12px;color:#000000;">Изменить</div>
<div class="t" style="left:1167px;top:731.34px;font-size:12px;color:#000000;">Новый угол поворота</div>
<div class="r" style="left:1292px;top:723px;width:48px;height:25px;background:#e9e9e9;border:1px solid #b4b4b4;box-sizing:border-box;"></div>
<div class="t" style="left:1295px;top:726.34px;font-size:12px;color:#6d6d6d;">0.00</div>
<div class="r" style="left:1402px;top:683px;width:262px;height:79px;border:2px solid #ececec;border-radius:4px;box-sizing:border-box;"></div>
<div class="r" style="left:1408px;top:681px;width:79.734375px;height:6px;background:#d4d4d4;"></div>
<div class="t" style="left:1410px;top:676.84px;font-size:12px;color:#000000;">Угол наклона</div>
<div class="r" style="left:1417px;top:701px;width:13px;height:13px;background:#ffffff;border:1px solid #333;box-sizing:border-box;"></div>
<div class="t" style="left:1436px;top:701.84px;font-size:12px;color:#000000;">Изменить</div>
<div class="t" style="left:1419px;top:731.34px;font-size:12px;color:#000000;">Новый угол наклона</div>
<div class="r" style="left:1537px;top:723px;width:48px;height:25px;background:#e9e9e9;border:1px solid #b4b4b4;box-sizing:border-box;"></div>
<div class="t" style="left:1540px;top:726.34px;font-size:12px;color:#6d6d6d;">15.00</div>
<div class="r" style="left:1359px;top:776px;width:33px;height:20px;background:#e1e1e1;border:1px solid #2f7fd8;box-sizing:border-box;"></div>
<div class="t" style="left:1359.00px;width:33px;text-align:center;top:780.84px;font-size:12px;color:#000000;">OK</div>
<div class="r" style="left:1402px;top:776px;width:53px;height:20px;background:#e1e1e1;border:1px solid #8a8a8a;box-sizing:border-box;"></div>
<div class="t" style="left:1402.00px;width:53px;text-align:center;top:780.84px;font-size:12px;color:#000000;">Отмена</div>
</body></html>
